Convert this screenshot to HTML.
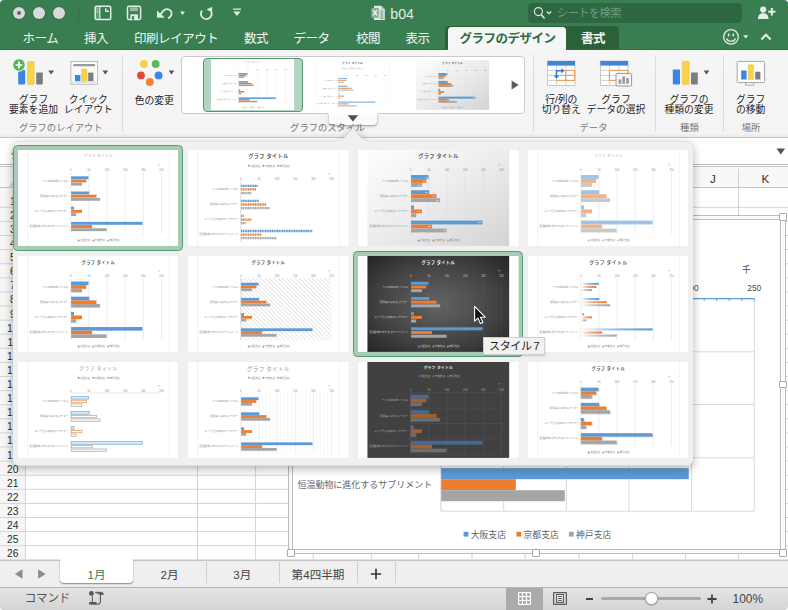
<!DOCTYPE html>
<html lang="ja"><head><meta charset="utf-8"><title>b04</title>
<style>
html,body{margin:0;padding:0;background:#fff;}
body{width:788px;height:610px;overflow:hidden;position:relative;font-family:"Liberation Sans","Noto Sans CJK JP",sans-serif;}
#win{position:absolute;left:0;top:0;width:788px;height:610px;overflow:hidden;border-radius:4px;background:#fff;}
.abs{position:absolute;}
.t{position:absolute;white-space:nowrap;line-height:1;}
.tab{position:absolute;top:31.5px;font-size:12.5px;color:#f3f6f3;white-space:nowrap;line-height:14px;}
.rl{position:absolute;font-size:9.8px;color:#1e1e1e;white-space:nowrap;line-height:10.3px;text-align:center;transform:translateX(-50%);}
.gl{position:absolute;top:123.2px;font-size:9.3px;color:#767676;white-space:nowrap;line-height:11px;transform:translateX(-50%);}
.sep{position:absolute;top:55px;height:77px;width:1px;background:#dcdcdc;}
.rh{position:absolute;left:0;width:25.5px;text-align:center;font-size:10.3px;color:#2a2a2a;line-height:14.1px;height:14.1px;}
.stab{position:absolute;top:568.4px;font-size:11.6px;color:#424242;white-space:nowrap;line-height:13px;transform:translateX(-50%);}
</style></head><body><div id="win">

<div class="abs" style="left:0;top:0;width:788px;height:50px;background:#397e51"></div>
<div class="abs" style="left:0;top:48.8px;width:788px;height:1.2px;background:#2f6b43"></div>
<div class="abs" style="left:13px;top:7px;width:12px;height:12px;border-radius:50%;background:#dbd9db;box-shadow:0 0 0 0.7px #2f6d45"></div>
<div class="abs" style="left:33px;top:7px;width:12px;height:12px;border-radius:50%;background:#dbd9db;box-shadow:0 0 0 0.7px #2f6d45"></div>
<div class="abs" style="left:53px;top:7px;width:12px;height:12px;border-radius:50%;background:#dbd9db;box-shadow:0 0 0 0.7px #2f6d45"></div>
<div class="abs" style="left:16.9px;top:10.8px;width:4.2px;height:4.2px;border-radius:50%;background:#666"></div>
<div class="abs" style="left:78px;top:6px;width:1px;height:15px;background:#33704a"></div>
<svg class="abs" style="left:90px;top:3px" width="160" height="22" viewBox="0 0 160 22" fill="none" stroke="#e4ece6" stroke-width="1.5">
<rect x="5.2" y="3.3" width="15.5" height="13.3" rx="1.4"/><rect x="5.2" y="3.3" width="4.4" height="13.3" fill="#e4ece6" fill-opacity="0.28" stroke="none"/><path d="M9.8 3.3V16.6" stroke-width="1.2"/><path d="M15.6 5.4V8.5H19" stroke-width="1.2"/><path d="M15.6 5.4L19 8.5" stroke-width="0.9"/><path d="M7.3 5.2v0.9M7.3 7.1v0.9M7.3 9v0.9" stroke-width="1.1"/>
<rect x="37.5" y="3.3" width="13.1" height="13.3" rx="1.6"/><rect x="40" y="4.3" width="8" height="3.9" fill="#e4ece6" fill-opacity="0.55" stroke="none"/><path d="M40.4 11.2H48V16.6H40.4Z" fill="#e4ece6" stroke="none"/><rect x="42" y="13.2" width="2.1" height="3.4" fill="#397e51" stroke="none"/>
<path d="M67 7.4V14.8H74.8Z" fill="#e4ece6" stroke="none"/><path d="M70.6 11.2C72.4 8.6 74.4 6 77 6.1 80 6.2 81.9 8.4 81.6 10.6 81.3 13 80 14.6 78.2 15.4" stroke-width="1.7"/>
<path d="M90 8.4h5l-2.5 3.6Z" fill="#e4ece6" stroke="none"/>
<path d="M112 7.4A5.4 5.4 0 1 0 121.3 8.6" stroke-width="1.7"/><path d="M116.6 6.6L122.2 3.8 122 9.6Z" fill="#e4ece6" stroke="none"/>
<path d="M143 6.2h8" stroke-width="1.3"/><path d="M143.3 8.4h7.4l-3.7 4.6Z" fill="#e4ece6" stroke="none"/>
</svg>
<svg class="abs" style="left:370px;top:4px" width="17" height="18" viewBox="0 0 17 18"><path d="M4 1.7H11.2L14.8 5.2V15.9H4Z" fill="#e6ebe7"/><path d="M11.2 1.7V5.2H14.8Z" fill="#b4c6b9"/><path d="M9.6 6.9h4.2M9.6 8.9h4.2M9.6 10.9h4.2M9.6 12.9h4.2M9.6 14.6h4.2M11.8 6.2v8.8" stroke="#6f9c7e" stroke-width="0.7"/><rect x="1.4" y="3.9" width="7.4" height="9.9" fill="#8db29a"/><path d="M3.2 6.2l3.8 5.2M7 6.2L3.2 11.4" stroke="#f1f5f2" stroke-width="1.3"/></svg>
<div class="t" style="left:390.3px;top:6.6px;font-size:14.2px;color:#e3e8e3;line-height:15px">b04</div>
<div class="abs" style="left:528px;top:3px;width:214px;height:20px;border-radius:4px;background:#2d6842"></div>
<svg class="abs" style="left:532px;top:5px" width="22" height="16" viewBox="0 0 22 16" fill="none" stroke="#e4ebe5"><circle cx="6.4" cy="6.6" r="4" stroke-width="1.15"/><path d="M9.3 9.7l3.3 3.7" stroke-width="1.5"/><path d="M14.8 6.5l2.2 2.1 2.2-2.1" stroke-width="1.2"/></svg>
<div class="t" style="left:557px;top:7.2px;font-size:11.2px;color:#6f9c7e;line-height:13px;letter-spacing:-0.55px">シートを検索</div>
<svg class="abs" style="left:757px;top:5px" width="20" height="15" viewBox="0 0 20 15"><circle cx="6.2" cy="4.6" r="3.1" fill="#e6ece7"/><path d="M0.9 14c0-4.2 2.3-5.8 5.3-5.8s5.3 1.6 5.3 5.8Z" fill="#e6ece7"/><path d="M14.8 3v7.4M11.2 6.7h7.2" stroke="#e6ece7" stroke-width="2"/></svg>
<div class="abs" style="left:445px;top:25.5px;width:174px;height:23.5px;border-radius:4px 4px 0 0;background:#2a6139"></div>
<div class="abs" style="left:447.5px;top:27.3px;width:118.5px;height:22.7px;border-radius:3.5px 3.5px 0 0;background:#f6f6f6"></div>
<div class="tab" style="left:22.6px;letter-spacing:-0.45px">ホーム</div>
<div class="tab" style="left:84px;letter-spacing:-0.45px">挿入</div>
<div class="tab" style="left:134px;letter-spacing:-0.45px">印刷レイアウト</div>
<div class="tab" style="left:244px;letter-spacing:-0.45px">数式</div>
<div class="tab" style="left:293.5px;letter-spacing:-0.45px">データ</div>
<div class="tab" style="left:355.9px;letter-spacing:-0.45px">校閲</div>
<div class="tab" style="left:405.5px;letter-spacing:-0.45px">表示</div>
<div class="tab" style="left:459.5px;color:#2f6d46;font-weight:bold;letter-spacing:-0.5px">グラフのデザイン</div>
<div class="tab" style="left:581px;color:#f6f8f6;font-weight:bold;letter-spacing:-0.4px">書式</div>
<svg class="abs" style="left:721px;top:28px" width="60" height="18" viewBox="0 0 60 18" fill="none" stroke="#e6ece7"><circle cx="10" cy="8.9" r="7.3" stroke-width="1.3"/><ellipse cx="7.6" cy="6.9" rx="0.85" ry="1.6" fill="#e6ece7" stroke="none"/><ellipse cx="12.3" cy="6.9" rx="0.85" ry="1.6" fill="#e6ece7" stroke="none"/><path d="M5.5 10.6C7 14.3 13 14.3 14.5 10.6" stroke-width="1.3"/><path d="M22 7.2h5.4l-2.7 3.4Z" fill="#e6ece7" stroke="none"/><path d="M40.4 11.4L45 6.8l4.6 4.6" stroke-width="2.1"/></svg>
<div class="abs" style="left:0;top:50px;width:788px;height:87.2px;background:linear-gradient(#f5f5f5 0,#f4f4f4 83px,#e9e9e9 87.2px)"></div>
<div class="abs" style="left:0;top:137px;width:788px;height:1px;background:#c6c6c6"></div>
<div class="sep" style="left:122.3px"></div>
<div class="sep" style="left:532.6px"></div>
<div class="sep" style="left:655.3px"></div>
<div class="sep" style="left:723.4px"></div>
<svg class="abs" style="left:10px;top:56px" width="48" height="32" viewBox="0 0 48 32"><rect x="8.2" y="14" width="7" height="14.4" rx="0.8" fill="#3b86e0"/><rect x="17.6" y="5.6" width="6.6" height="22.8" rx="0.8" fill="#f8d34c" stroke="#e0b830" stroke-width="0.5"/><rect x="26.2" y="16.6" width="6.6" height="11.8" rx="0.8" fill="#7d7d7d"/><circle cx="9" cy="9" r="6.2" fill="#54b356" stroke="#f4f4f4" stroke-width="1"/><path d="M9 5.6v6.8M5.6 9h6.8" stroke="#fff" stroke-width="1.7"/><path d="M38.2 14.6h5.8l-2.9 3.8Z" fill="#555"/></svg>
<div class="rl" style="left:33.5px;top:94.5px">グラフ<br>要素を追加</div>
<svg class="abs" style="left:68px;top:58px" width="46" height="30" viewBox="0 0 46 30"><rect x="2.9" y="3.6" width="26.6" height="22.6" fill="#fbfbfb" stroke="#b5b5b5" stroke-width="0.9"/><rect x="5.4" y="6" width="21.6" height="2.3" fill="#9a9a9a"/><rect x="7" y="17" width="5.4" height="6.2" fill="#3b86e0"/><rect x="13.6" y="11" width="5.4" height="12.2" fill="#f8d34c" stroke="#e0b830" stroke-width="0.4"/><rect x="20.2" y="14.6" width="5.2" height="8.6" fill="#7d7d7d"/><path d="M4 24.2h24.4" stroke="#cfcfcf" stroke-width="0.8"/><path d="M34.4 12.6h5.8l-2.9 3.8Z" fill="#555"/></svg>
<div class="rl" style="left:88.3px;top:94.5px">クイック<br>レイアウト</div>
<svg class="abs" style="left:134px;top:57px" width="44" height="32" viewBox="0 0 44 32"><circle cx="10" cy="7" r="3.9" fill="#f7d046"/><circle cx="21.7" cy="7" r="3.9" fill="#5cb85c"/><circle cx="7" cy="18.4" r="3.9" fill="#e0483e"/><circle cx="24.6" cy="18.4" r="3.9" fill="#3b86e0"/><circle cx="15.8" cy="24.9" r="3.9" fill="#f08232"/><path d="M34.6 13.6h5.8l-2.9 3.8Z" fill="#555"/></svg>
<div class="rl" style="left:154.3px;top:95.8px">色の変更</div>
<div class="gl" style="left:60.8px">グラフのレイアウト</div>
<div class="abs" style="left:181.2px;top:56.2px;width:343.6px;height:57.4px;border:1px solid #cbcbcb;border-radius:4px;background:#fff;box-sizing:border-box"></div>
<div class="abs" style="left:203px;top:57.6px;width:100px;height:54.4px;border:1.2px solid #4f9a6c;border-radius:4px;background:#b3d4c0;box-sizing:border-box"></div>
<svg style="position:absolute;left:210.7px;top:59.2px" width="83.6" height="51.2" viewBox="0 0 160 96" preserveAspectRatio="none"><rect width="160" height="96" fill="#fff"/><path d="M9.6 0V96M150.8 0V96" stroke="#e6e6e6" stroke-width="0.5" fill="none"/><text x="80" y="7.10" font-family="Liberation Sans, Noto Sans CJK JP, sans-serif" font-size="3.6" font-weight="normal" fill="#a0a0a0" text-anchor="middle" letter-spacing="0.3">グラフ タイトル</text><path d="M52.60 22.20V84.20M70.66 22.20V84.20M88.72 22.20V84.20M106.78 22.20V84.20M124.84 22.20V84.20M142.90 22.20V84.20" stroke="#dedede" stroke-width="0.55" fill="none"/><text x="52.60" y="21.50" font-family="Liberation Sans, Noto Sans CJK JP, sans-serif" font-size="2.6" fill="#8c8c8c" text-anchor="middle">0</text><text x="70.66" y="21.50" font-family="Liberation Sans, Noto Sans CJK JP, sans-serif" font-size="2.6" fill="#8c8c8c" text-anchor="middle">50</text><text x="88.72" y="21.50" font-family="Liberation Sans, Noto Sans CJK JP, sans-serif" font-size="2.6" fill="#8c8c8c" text-anchor="middle">100</text><text x="106.78" y="21.50" font-family="Liberation Sans, Noto Sans CJK JP, sans-serif" font-size="2.6" fill="#8c8c8c" text-anchor="middle">150</text><text x="124.84" y="21.50" font-family="Liberation Sans, Noto Sans CJK JP, sans-serif" font-size="2.6" fill="#8c8c8c" text-anchor="middle">200</text><text x="142.90" y="21.50" font-family="Liberation Sans, Noto Sans CJK JP, sans-serif" font-size="2.6" fill="#8c8c8c" text-anchor="middle">250</text><text x="140.70" y="16.30" font-family="Liberation Sans, Noto Sans CJK JP, sans-serif" font-size="2.4" fill="#8c8c8c" text-anchor="middle">千</text><rect x="52.9" y="26.35" width="17.34" height="2.9" fill="#5b9bd5"/><rect x="52.9" y="29.55" width="15.17" height="2.9" fill="#ed7d31"/><rect x="52.9" y="32.75" width="10.84" height="2.9" fill="#a5a5a5"/><text x="50.2" y="31.90" font-family="Liberation Sans, Noto Sans CJK JP, sans-serif" font-size="2.6" fill="#8c8c8c" text-anchor="end">ウニのabsorbバイスル</text><rect x="52.9" y="41.55" width="18.06" height="2.9" fill="#5b9bd5"/><rect x="52.9" y="44.75" width="25.28" height="2.9" fill="#ed7d31"/><rect x="52.9" y="47.95" width="28.90" height="2.9" fill="#a5a5a5"/><text x="50.2" y="47.10" font-family="Liberation Sans, Noto Sans CJK JP, sans-serif" font-size="2.6" fill="#8c8c8c" text-anchor="end">尻尾蘇になれるパウダー</text><rect x="52.9" y="56.75" width="2.89" height="2.9" fill="#5b9bd5"/><rect x="52.9" y="59.95" width="10.84" height="2.9" fill="#ed7d31"/><rect x="52.9" y="63.15" width="5.06" height="2.9" fill="#a5a5a5"/><text x="50.2" y="62.30" font-family="Liberation Sans, Noto Sans CJK JP, sans-serif" font-size="2.6" fill="#8c8c8c" text-anchor="end">ピンク色に染めるヘアカラー</text><rect x="52.9" y="71.95" width="71.16" height="2.9" fill="#5b9bd5"/><rect x="52.9" y="75.15" width="20.95" height="2.9" fill="#ed7d31"/><rect x="52.9" y="78.35" width="35.40" height="2.9" fill="#a5a5a5"/><text x="50.2" y="77.50" font-family="Liberation Sans, Noto Sans CJK JP, sans-serif" font-size="2.6" fill="#8c8c8c" text-anchor="end">恒温動物に進化するサプリメント</text><rect x="59.60" y="89.80" width="1.7" height="1.7" fill="#5b9bd5"/><text x="61.70" y="91.60" font-family="Liberation Sans, Noto Sans CJK JP, sans-serif" font-size="2.6" fill="#8c8c8c">大阪支店</text><rect x="74.20" y="89.80" width="1.7" height="1.7" fill="#ed7d31"/><text x="76.30" y="91.60" font-family="Liberation Sans, Noto Sans CJK JP, sans-serif" font-size="2.6" fill="#8c8c8c">京都支店</text><rect x="88.80" y="89.80" width="1.7" height="1.7" fill="#a5a5a5"/><text x="90.90" y="91.60" font-family="Liberation Sans, Noto Sans CJK JP, sans-serif" font-size="2.6" fill="#8c8c8c">神戸支店</text></svg>
<svg style="position:absolute;left:310.9px;top:60px" width="83" height="49.8" viewBox="0 0 160 96" preserveAspectRatio="none"><rect width="160" height="96" fill="#fff"/><path d="M9.6 0V96M150.8 0V96" stroke="#e6e6e6" stroke-width="0.5" fill="none"/><text x="80" y="8.47" font-family="Liberation Sans, Noto Sans CJK JP, sans-serif" font-size="5.2" font-weight="bold" fill="#606060" text-anchor="middle" letter-spacing="0.3">グラフ タイトル</text><path d="M52.6 30.60V92.20" stroke="#c4c4c4" stroke-width="0.6"/><text x="52.60" y="30.10" font-family="Liberation Sans, Noto Sans CJK JP, sans-serif" font-size="2.6" fill="#8c8c8c" text-anchor="middle">0</text><text x="70.66" y="30.10" font-family="Liberation Sans, Noto Sans CJK JP, sans-serif" font-size="2.6" fill="#8c8c8c" text-anchor="middle">50</text><text x="88.72" y="30.10" font-family="Liberation Sans, Noto Sans CJK JP, sans-serif" font-size="2.6" fill="#8c8c8c" text-anchor="middle">100</text><text x="106.78" y="30.10" font-family="Liberation Sans, Noto Sans CJK JP, sans-serif" font-size="2.6" fill="#8c8c8c" text-anchor="middle">150</text><text x="124.84" y="30.10" font-family="Liberation Sans, Noto Sans CJK JP, sans-serif" font-size="2.6" fill="#8c8c8c" text-anchor="middle">200</text><text x="142.90" y="30.10" font-family="Liberation Sans, Noto Sans CJK JP, sans-serif" font-size="2.6" fill="#8c8c8c" text-anchor="middle">250</text><text x="140.70" y="24.90" font-family="Liberation Sans, Noto Sans CJK JP, sans-serif" font-size="2.4" fill="#8c8c8c" text-anchor="middle">千</text><line x1="52.90" y1="35.92" x2="69.94" y2="35.92" stroke="#5b9bd5" stroke-width="2.3" stroke-dasharray="1.25 0.45"/><line x1="52.90" y1="39.52" x2="67.77" y2="39.52" stroke="#ed7d31" stroke-width="2.3" stroke-dasharray="1.25 0.45"/><line x1="52.90" y1="43.12" x2="63.44" y2="43.12" stroke="#a5a5a5" stroke-width="2.3" stroke-dasharray="1.25 0.45"/><text x="50.2" y="40.42" font-family="Liberation Sans, Noto Sans CJK JP, sans-serif" font-size="2.6" fill="#8c8c8c" text-anchor="end">ウニのabsorbバイスル</text><line x1="52.90" y1="50.98" x2="70.66" y2="50.98" stroke="#5b9bd5" stroke-width="2.3" stroke-dasharray="1.25 0.45"/><line x1="52.90" y1="54.58" x2="77.88" y2="54.58" stroke="#ed7d31" stroke-width="2.3" stroke-dasharray="1.25 0.45"/><line x1="52.90" y1="58.18" x2="81.50" y2="58.18" stroke="#a5a5a5" stroke-width="2.3" stroke-dasharray="1.25 0.45"/><text x="50.2" y="55.48" font-family="Liberation Sans, Noto Sans CJK JP, sans-serif" font-size="2.6" fill="#8c8c8c" text-anchor="end">尻尾蘇になれるパウダー</text><line x1="52.90" y1="66.03" x2="55.49" y2="66.03" stroke="#5b9bd5" stroke-width="2.3" stroke-dasharray="1.25 0.45"/><line x1="52.90" y1="69.62" x2="63.44" y2="69.62" stroke="#ed7d31" stroke-width="2.3" stroke-dasharray="1.25 0.45"/><line x1="52.90" y1="73.23" x2="57.66" y2="73.23" stroke="#a5a5a5" stroke-width="2.3" stroke-dasharray="1.25 0.45"/><text x="50.2" y="70.53" font-family="Liberation Sans, Noto Sans CJK JP, sans-serif" font-size="2.6" fill="#8c8c8c" text-anchor="end">ピンク色に染めるヘアカラー</text><line x1="52.90" y1="81.08" x2="123.76" y2="81.08" stroke="#5b9bd5" stroke-width="2.3" stroke-dasharray="1.25 0.45"/><line x1="52.90" y1="84.68" x2="73.55" y2="84.68" stroke="#ed7d31" stroke-width="2.3" stroke-dasharray="1.25 0.45"/><line x1="52.90" y1="88.28" x2="88.00" y2="88.28" stroke="#a5a5a5" stroke-width="2.3" stroke-dasharray="1.25 0.45"/><text x="50.2" y="85.58" font-family="Liberation Sans, Noto Sans CJK JP, sans-serif" font-size="2.6" fill="#8c8c8c" text-anchor="end">恒温動物に進化するサプリメント</text><rect x="59.60" y="14.90" width="1.7" height="1.7" fill="#5b9bd5"/><text x="61.70" y="16.70" font-family="Liberation Sans, Noto Sans CJK JP, sans-serif" font-size="2.6" fill="#8c8c8c">大阪支店</text><rect x="74.20" y="14.90" width="1.7" height="1.7" fill="#ed7d31"/><text x="76.30" y="16.70" font-family="Liberation Sans, Noto Sans CJK JP, sans-serif" font-size="2.6" fill="#8c8c8c">京都支店</text><rect x="88.80" y="14.90" width="1.7" height="1.7" fill="#a5a5a5"/><text x="90.90" y="16.70" font-family="Liberation Sans, Noto Sans CJK JP, sans-serif" font-size="2.6" fill="#8c8c8c">神戸支店</text></svg>
<svg style="position:absolute;left:411.1px;top:60px" width="83" height="49.8" viewBox="0 0 160 96" preserveAspectRatio="none"><rect width="160" height="96" fill="#fff"/><defs><linearGradient id="g3gc" x1="0" y1="0" x2="1" y2="1"><stop offset="0" stop-color="#fefefe"/><stop offset="0.5" stop-color="#ececec"/><stop offset="1" stop-color="#d3d3d3"/></linearGradient></defs><rect x="9.4" y="0" width="141.2" height="96" fill="url(#g3gc)"/><text x="80" y="8.27" font-family="Liberation Sans, Noto Sans CJK JP, sans-serif" font-size="5.2" font-weight="bold" fill="#606060" text-anchor="middle" letter-spacing="0.3">グラフ タイトル</text><path d="M52.60 22.20V84.20M70.66 22.20V84.20M88.72 22.20V84.20M106.78 22.20V84.20M124.84 22.20V84.20M142.90 22.20V84.20" stroke="#dedede" stroke-width="0.55" fill="none"/><text x="52.60" y="21.50" font-family="Liberation Sans, Noto Sans CJK JP, sans-serif" font-size="2.6" fill="#8c8c8c" text-anchor="middle">0</text><text x="70.66" y="21.50" font-family="Liberation Sans, Noto Sans CJK JP, sans-serif" font-size="2.6" fill="#8c8c8c" text-anchor="middle">50</text><text x="88.72" y="21.50" font-family="Liberation Sans, Noto Sans CJK JP, sans-serif" font-size="2.6" fill="#8c8c8c" text-anchor="middle">100</text><text x="106.78" y="21.50" font-family="Liberation Sans, Noto Sans CJK JP, sans-serif" font-size="2.6" fill="#8c8c8c" text-anchor="middle">150</text><text x="124.84" y="21.50" font-family="Liberation Sans, Noto Sans CJK JP, sans-serif" font-size="2.6" fill="#8c8c8c" text-anchor="middle">200</text><text x="142.90" y="21.50" font-family="Liberation Sans, Noto Sans CJK JP, sans-serif" font-size="2.6" fill="#8c8c8c" text-anchor="middle">250</text><text x="140.70" y="16.30" font-family="Liberation Sans, Noto Sans CJK JP, sans-serif" font-size="2.4" fill="#8c8c8c" text-anchor="middle">千</text><rect x="52.9" y="25.07" width="17.34" height="3.85" fill="#5b9bd5"/><text x="68.94" y="27.93" font-family="Liberation Sans, Noto Sans CJK JP, sans-serif" font-size="2.3" fill="#fff" text-anchor="end">48</text><rect x="52.9" y="29.07" width="15.17" height="3.85" fill="#ed7d31"/><text x="66.77" y="31.92" font-family="Liberation Sans, Noto Sans CJK JP, sans-serif" font-size="2.3" fill="#fff" text-anchor="end">42</text><rect x="52.9" y="33.08" width="10.84" height="3.85" fill="#a5a5a5"/><text x="62.44" y="35.93" font-family="Liberation Sans, Noto Sans CJK JP, sans-serif" font-size="2.3" fill="#fff" text-anchor="end">30</text><text x="50.2" y="31.90" font-family="Liberation Sans, Noto Sans CJK JP, sans-serif" font-size="2.6" fill="#8c8c8c" text-anchor="end">ウニのabsorbバイスル</text><rect x="52.9" y="40.27" width="18.06" height="3.85" fill="#5b9bd5"/><text x="69.66" y="43.12" font-family="Liberation Sans, Noto Sans CJK JP, sans-serif" font-size="2.3" fill="#fff" text-anchor="end">50</text><rect x="52.9" y="44.27" width="25.28" height="3.85" fill="#ed7d31"/><text x="76.88" y="47.12" font-family="Liberation Sans, Noto Sans CJK JP, sans-serif" font-size="2.3" fill="#fff" text-anchor="end">70</text><rect x="52.9" y="48.27" width="28.90" height="3.85" fill="#a5a5a5"/><text x="80.50" y="51.12" font-family="Liberation Sans, Noto Sans CJK JP, sans-serif" font-size="2.3" fill="#fff" text-anchor="end">80</text><text x="50.2" y="47.10" font-family="Liberation Sans, Noto Sans CJK JP, sans-serif" font-size="2.6" fill="#8c8c8c" text-anchor="end">尻尾蘇になれるパウダー</text><rect x="52.9" y="55.48" width="2.89" height="3.85" fill="#5b9bd5"/><rect x="52.9" y="59.48" width="10.84" height="3.85" fill="#ed7d31"/><text x="62.44" y="62.33" font-family="Liberation Sans, Noto Sans CJK JP, sans-serif" font-size="2.3" fill="#fff" text-anchor="end">30</text><rect x="52.9" y="63.48" width="5.06" height="3.85" fill="#a5a5a5"/><text x="50.2" y="62.30" font-family="Liberation Sans, Noto Sans CJK JP, sans-serif" font-size="2.6" fill="#8c8c8c" text-anchor="end">ピンク色に染めるヘアカラー</text><rect x="52.9" y="70.67" width="71.16" height="3.85" fill="#5b9bd5"/><text x="122.76" y="73.52" font-family="Liberation Sans, Noto Sans CJK JP, sans-serif" font-size="2.3" fill="#fff" text-anchor="end">197</text><rect x="52.9" y="74.67" width="20.95" height="3.85" fill="#ed7d31"/><text x="72.55" y="77.52" font-family="Liberation Sans, Noto Sans CJK JP, sans-serif" font-size="2.3" fill="#fff" text-anchor="end">58</text><rect x="52.9" y="78.67" width="35.40" height="3.85" fill="#a5a5a5"/><text x="87.00" y="81.52" font-family="Liberation Sans, Noto Sans CJK JP, sans-serif" font-size="2.3" fill="#fff" text-anchor="end">98</text><text x="50.2" y="77.50" font-family="Liberation Sans, Noto Sans CJK JP, sans-serif" font-size="2.6" fill="#8c8c8c" text-anchor="end">恒温動物に進化するサプリメント</text><rect x="59.60" y="89.80" width="1.7" height="1.7" fill="#5b9bd5"/><text x="61.70" y="91.60" font-family="Liberation Sans, Noto Sans CJK JP, sans-serif" font-size="2.6" fill="#8c8c8c">大阪支店</text><rect x="74.20" y="89.80" width="1.7" height="1.7" fill="#ed7d31"/><text x="76.30" y="91.60" font-family="Liberation Sans, Noto Sans CJK JP, sans-serif" font-size="2.6" fill="#8c8c8c">京都支店</text><rect x="88.80" y="89.80" width="1.7" height="1.7" fill="#a5a5a5"/><text x="90.90" y="91.60" font-family="Liberation Sans, Noto Sans CJK JP, sans-serif" font-size="2.6" fill="#8c8c8c">神戸支店</text></svg>
<svg class="abs" style="left:510px;top:79px" width="10" height="12" viewBox="0 0 10 12"><path d="M1.6 1.4L8.6 6 1.6 10.6Z" fill="#5a5a5a"/></svg>
<div class="abs" style="left:329.3px;top:113px;width:47.6px;height:11.8px;background:#fbfbfb;border-radius:0 0 4px 4px;box-shadow:0 1px 2.5px rgba(0,0,0,0.4)"></div>
<div class="abs" style="left:328.2px;top:109.5px;width:49.8px;height:4px;background:#fff"></div>
<svg class="abs" style="left:346px;top:114px" width="14" height="9" viewBox="0 0 14 9"><path d="M1.6 1.2h10.6L6.9 7.6Z" fill="#4f4f4f"/></svg>
<div class="gl" style="left:327.3px">グラフのスタイル</div>
<svg class="abs" style="left:545px;top:58px" width="34" height="30" viewBox="0 0 34 30"><rect x="2.4" y="3" width="27.6" height="24.4" fill="#fff" stroke="#bdbdbd" stroke-width="0.8"/><rect x="2.4" y="3" width="27.6" height="4.6" fill="#3e86dc"/><path d="M2.4 12.4H30M2.4 17.4H30M2.4 22.4H30M11.4 3V27.4M20.8 3V27.4" stroke="#c4c4c4" stroke-width="0.8" fill="none"/><path d="M11.4 7.6V3M20.8 7.6V3" stroke="#2a6fc4" stroke-width="0.8"/><path d="M20.8 12.4H29.8V22.4H20.8ZM20.8 17.4H29.8M11.4 22.4H20.8M15 17.4H20.8" stroke="#f0984e" stroke-width="1" fill="none"/><path d="M17 12.7H11.5V18" stroke="#2f7ad6" stroke-width="1.5" fill="none"/><path d="M16.4 9.9L19.6 12.7 16.4 15.5ZM8.7 17.4H14.3L11.5 20.7Z" fill="#2f7ad6"/></svg>
<div class="rl" style="left:561.3px;top:94.5px">行/列の<br>切り替え</div>
<svg class="abs" style="left:598px;top:58px" width="36" height="30" viewBox="0 0 36 30"><rect x="2.4" y="3" width="27.6" height="24.4" fill="#fff" stroke="#bdbdbd" stroke-width="0.8"/><rect x="2.4" y="3" width="27.6" height="4.6" fill="#3e86dc"/><path d="M2.4 12.4H30M2.4 17.4H30M2.4 22.4H30M11.4 3V27.4M20.8 3V27.4" stroke="#c4c4c4" stroke-width="0.8" fill="none"/><path d="M11.4 7.6V3M20.8 7.6V3" stroke="#2a6fc4" stroke-width="0.8"/><path d="M11.4 12.4H30V22.4H11.4Z" stroke="#f0984e" stroke-width="1" fill="none"/><rect x="18" y="15.4" width="15.6" height="12.6" rx="1" fill="#f6f6f6" stroke="#8e8e8e" stroke-width="0.9"/><rect x="20.6" y="21.4" width="2.6" height="4.4" fill="#9a9a9a"/><rect x="24.4" y="18.4" width="2.6" height="7.4" fill="#9a9a9a"/><rect x="28.2" y="20" width="2.6" height="5.8" fill="#9a9a9a"/></svg>
<div class="rl" style="left:616px;top:94.5px">グラフ<br>データの選択</div>
<div class="gl" style="left:593.5px">データ</div>
<svg class="abs" style="left:668px;top:56px" width="46" height="32" viewBox="0 0 46 32"><rect x="4.8" y="13.4" width="7.2" height="15" rx="0.8" fill="#3b86e0"/><rect x="14.3" y="5.3" width="6.8" height="23.1" rx="0.8" fill="#f8d34c" stroke="#e0b830" stroke-width="0.5"/><rect x="23" y="16.4" width="6.8" height="12" rx="0.8" fill="#7d7d7d"/><path d="M35.6 14.6h5.8l-2.9 3.8Z" fill="#555"/></svg>
<div class="rl" style="left:689px;top:94.5px">グラフの<br>種類の変更</div>
<div class="gl" style="left:689.4px">種類</div>
<svg class="abs" style="left:734px;top:58px" width="34" height="30" viewBox="0 0 34 30"><rect x="3.2" y="3.4" width="27.4" height="21.2" rx="1" fill="#fdfdfd" stroke="#9c9c9c" stroke-width="0.9"/><rect x="11.6" y="24.6" width="8.4" height="2.6" fill="#e8e8e8" stroke="#9a9a9a" stroke-width="0.6"/><rect x="7.2" y="12.6" width="5.4" height="9" rx="0.6" fill="#3b86e0"/><rect x="14.2" y="6.8" width="5.4" height="14.8" rx="0.6" fill="#f8d34c" stroke="#e0b830" stroke-width="0.4"/><rect x="21.2" y="13.8" width="5.2" height="7.8" rx="0.6" fill="#7d7d7d"/></svg>
<div class="rl" style="left:750.7px;top:94.5px">グラフ<br>の移動</div>
<div class="gl" style="left:751px">場所</div>
<div class="abs" style="left:0;top:138px;width:788px;height:27px;background:#fff"></div>
<div class="abs" style="left:0;top:164.2px;width:788px;height:1px;background:#bdbdbd"></div>
<div class="abs" style="left:0;top:166.2px;width:788px;height:1px;background:#c9c9c9"></div>
<div class="abs" style="left:0;top:167.2px;width:788px;height:20.4px;background:#f8f8f8"></div>
<div class="abs" style="left:0;top:187.4px;width:788px;height:1px;background:#c4c4c4"></div>
<svg class="abs" style="left:775px;top:147px" width="12" height="9" viewBox="0 0 12 9"><path d="M1.4 1.4h8.8L5.8 7.6Z" fill="#555"/></svg>
<div class="t" style="left:10.6px;top:147.5px;font-size:10.5px;color:#222;line-height:12px">グラフ 1</div>
<div class="t" style="left:713px;top:172.5px;font-size:11.6px;color:#333;line-height:12px;transform:translateX(-50%)">J</div>
<div class="t" style="left:765.3px;top:172.5px;font-size:11.6px;color:#333;line-height:12px;transform:translateX(-50%)">K</div>
<div class="abs" style="left:738.2px;top:169px;width:1px;height:19px;background:#cfcfcf"></div>
<div class="abs" style="left:685.6px;top:169px;width:1px;height:19px;background:#cfcfcf"></div>
<svg class="abs" style="left:6px;top:176px" width="12" height="12" viewBox="0 0 12 12"><path d="M10.4 2.6V10.6H2.4Z" fill="#d2d2d2"/></svg>
<svg class="abs" style="left:0;top:188px" width="788" height="372" viewBox="0 188 788 372"><rect x="0" y="188" width="25.5" height="372" fill="#f6f6f6"/><g stroke="#d4d4d4" stroke-width="1" fill="none"><path d="M0 207.3H788M0 221.4H788M0 235.5H788M0 249.6H788M0 263.7H788M0 277.8H788M0 291.9H788M0 306.0H788M0 320.1H788M0 334.2H788M0 348.3H788M0 362.4H788M0 376.5H788M0 390.6H788M0 404.7H788M0 418.8H788M0 432.9H788M0 447.0H788M0 461.1H788M0 475.2H788M0 489.3H788M0 503.4H788M0 517.5H788M0 531.6H788M0 545.7H788M0 559.8H788M25.5 188V560M197.5 188V560M255.6 188V560M313.2 188V560M371.7 188V560M418.6 188V560M472 188V560M525.2 188V560M579 188V560M632.6 188V560M685.6 188V560M738.4 188V560"/></g></svg>
<div class="rh" style="top:194.6px">1</div>
<div class="rh" style="top:208.8px">2</div>
<div class="rh" style="top:222.9px">3</div>
<div class="rh" style="top:237.0px">4</div>
<div class="rh" style="top:251.1px">5</div>
<div class="rh" style="top:265.2px">6</div>
<div class="rh" style="top:279.3px">7</div>
<div class="rh" style="top:293.4px">8</div>
<div class="rh" style="top:307.5px">9</div>
<div class="rh" style="top:321.6px">10</div>
<div class="rh" style="top:335.7px">11</div>
<div class="rh" style="top:349.8px">12</div>
<div class="rh" style="top:363.9px">13</div>
<div class="rh" style="top:378.0px">14</div>
<div class="rh" style="top:392.1px">15</div>
<div class="rh" style="top:406.2px">16</div>
<div class="rh" style="top:420.3px">17</div>
<div class="rh" style="top:434.4px">18</div>
<div class="rh" style="top:448.5px">19</div>
<div class="rh" style="top:462.6px">20</div>
<div class="rh" style="top:476.7px">21</div>
<div class="rh" style="top:490.8px">22</div>
<div class="rh" style="top:504.9px">23</div>
<div class="rh" style="top:519.0px">24</div>
<div class="rh" style="top:533.1px">25</div>
<div class="rh" style="top:547.2px">26</div>
<div class="abs" style="left:288.2px;top:214.6px;width:497.4px;height:339.6px;box-sizing:border-box;border:1px solid #bcbcbc;background:#fbfbfb"></div>
<div class="abs" style="left:292.4px;top:218.8px;width:489px;height:331.2px;box-sizing:border-box;border:1px solid #bcbcbc;background:#fff"></div>
<svg class="abs" style="left:293.4px;top:219.8px" width="487" height="329.2" viewBox="293.4 219.8 487 329.2"><g stroke="#d9d9d9" stroke-width="1" fill="none"><path d="M504.1 299V511M566.7 299V511M629.4 299V511M692.0 299V511M754.7 299V511M441.4 351.6H754.7M441.4 404.4H754.7M441.4 457.6H754.7M441.4 511H754.7"/></g><path d="M441.4 298.4H754.7" stroke="#5b9bd5" stroke-width="1.2"/><path d="M441.40 298.4v2.6M453.93 298.4v2.6M466.46 298.4v2.6M479.00 298.4v2.6M491.53 298.4v2.6M504.06 298.4v2.6M516.59 298.4v2.6M529.12 298.4v2.6M541.66 298.4v2.6M554.19 298.4v2.6M566.72 298.4v2.6M579.25 298.4v2.6M591.78 298.4v2.6M604.32 298.4v2.6M616.85 298.4v2.6M629.38 298.4v2.6M641.91 298.4v2.6M654.44 298.4v2.6M666.98 298.4v2.6M679.51 298.4v2.6M692.04 298.4v2.6M704.57 298.4v2.6M717.10 298.4v2.6M729.64 298.4v2.6M742.17 298.4v2.6M754.70 298.4v2.6" stroke="#5b9bd5" stroke-width="0.9"/><path d="M441.4 298.4V511" stroke="#d0d0d0" stroke-width="1"/><rect x="441.6" y="468" width="247.6" height="11" fill="#5b9bd5"/><rect x="441.6" y="479" width="74.6" height="11" fill="#ed7d31"/><rect x="441.6" y="490" width="123.6" height="11" fill="#a5a5a5"/><g font-family="Liberation Sans, Noto Sans CJK JP, sans-serif" fill="#484848"><text x="441.4" y="291.2" font-size="8.4" text-anchor="middle">0</text><text x="504.1" y="291.2" font-size="8.4" text-anchor="middle">50</text><text x="566.7" y="291.2" font-size="8.4" text-anchor="middle">100</text><text x="629.4" y="291.2" font-size="8.4" text-anchor="middle">150</text><text x="692.0" y="291.2" font-size="8.4" text-anchor="middle">200</text><text x="754.7" y="291.2" font-size="8.4" text-anchor="middle">250</text><text x="746.8" y="272.8" font-size="8.6" text-anchor="middle">千</text><text x="432.6" y="487.4" font-size="9" text-anchor="end" fill="#666">恒温動物に進化するサプリメント</text><rect x="464" y="531.6" width="4.8" height="4.8" fill="#5b9bd5"/><text x="471.2" y="537.4" font-size="8.8" fill="#5c5c5c">大阪支店</text><rect x="516.8" y="531.6" width="4.8" height="4.8" fill="#ed7d31"/><text x="524.0" y="537.4" font-size="8.8" fill="#5c5c5c">京都支店</text><rect x="569.3" y="531.6" width="4.8" height="4.8" fill="#a5a5a5"/><text x="576.5" y="537.4" font-size="8.8" fill="#5c5c5c">神戸支店</text></g></svg>
<div class="abs" style="left:286.6px;top:213.0px;width:8px;height:7.6px;box-sizing:border-box;border:1px solid #a9a9a9;background:#fff;border-radius:1px"></div>
<div class="abs" style="left:532.4px;top:213.0px;width:8px;height:7.6px;box-sizing:border-box;border:1px solid #a9a9a9;background:#fff;border-radius:1px"></div>
<div class="abs" style="left:779.4px;top:213.0px;width:8px;height:7.6px;box-sizing:border-box;border:1px solid #a9a9a9;background:#fff;border-radius:1px"></div>
<div class="abs" style="left:286.6px;top:380.59999999999997px;width:8px;height:7.6px;box-sizing:border-box;border:1px solid #a9a9a9;background:#fff;border-radius:1px"></div>
<div class="abs" style="left:779.4px;top:380.59999999999997px;width:8px;height:7.6px;box-sizing:border-box;border:1px solid #a9a9a9;background:#fff;border-radius:1px"></div>
<div class="abs" style="left:286.6px;top:549.0px;width:8px;height:7.6px;box-sizing:border-box;border:1px solid #a9a9a9;background:#fff;border-radius:1px"></div>
<div class="abs" style="left:532.4px;top:549.0px;width:8px;height:7.6px;box-sizing:border-box;border:1px solid #a9a9a9;background:#fff;border-radius:1px"></div>
<div class="abs" style="left:779.4px;top:549.0px;width:8px;height:7.6px;box-sizing:border-box;border:1px solid #a9a9a9;background:#fff;border-radius:1px"></div>
<svg class="abs" style="left:0;top:110px;filter:drop-shadow(0 0 0.5px rgba(0,0,0,0.25)) drop-shadow(0 3px 5px rgba(0,0,0,0.3));overflow:visible" width="788" height="380" viewBox="0 110 788 380"><path d="M18.8 141.2H334C343.5 141.2 347.6 134.5 352.8 127.6C358 134.5 362.1 141.2 371.6 141.2H687A6 6 0 0 1 693 147.2V459.8A6 6 0 0 1 687 465.8H18.8A6 6 0 0 1 12.8 459.8V147.2A6 6 0 0 1 18.8 141.2Z" fill="#f0f0f0"/></svg>
<div class="abs" style="left:13.2px;top:145.2px;width:170px;height:105.4px;box-sizing:border-box;border:1.4px solid #549d74;border-radius:4.5px;background:#a8cbb6"></div>
<div class="abs" style="left:353px;top:251.3px;width:170.4px;height:105.5px;box-sizing:border-box;border:1.4px solid #549d74;border-radius:4.5px;background:#a8cbb6"></div>
<svg style="position:absolute;left:17.8px;top:149.8px" width="160.6" height="95.9" viewBox="0 0 160 96" preserveAspectRatio="none"><rect width="160" height="96" fill="#fff"/><path d="M9.6 0V96M150.8 0V96" stroke="#e6e6e6" stroke-width="0.5" fill="none"/><text x="80" y="7.10" font-family="Liberation Sans, Noto Sans CJK JP, sans-serif" font-size="3.6" font-weight="normal" fill="#a0a0a0" text-anchor="middle" letter-spacing="0.3">グラフ タイトル</text><path d="M52.60 22.20V84.20M70.66 22.20V84.20M88.72 22.20V84.20M106.78 22.20V84.20M124.84 22.20V84.20M142.90 22.20V84.20" stroke="#dedede" stroke-width="0.55" fill="none"/><text x="52.60" y="21.50" font-family="Liberation Sans, Noto Sans CJK JP, sans-serif" font-size="2.6" fill="#8c8c8c" text-anchor="middle">0</text><text x="70.66" y="21.50" font-family="Liberation Sans, Noto Sans CJK JP, sans-serif" font-size="2.6" fill="#8c8c8c" text-anchor="middle">50</text><text x="88.72" y="21.50" font-family="Liberation Sans, Noto Sans CJK JP, sans-serif" font-size="2.6" fill="#8c8c8c" text-anchor="middle">100</text><text x="106.78" y="21.50" font-family="Liberation Sans, Noto Sans CJK JP, sans-serif" font-size="2.6" fill="#8c8c8c" text-anchor="middle">150</text><text x="124.84" y="21.50" font-family="Liberation Sans, Noto Sans CJK JP, sans-serif" font-size="2.6" fill="#8c8c8c" text-anchor="middle">200</text><text x="142.90" y="21.50" font-family="Liberation Sans, Noto Sans CJK JP, sans-serif" font-size="2.6" fill="#8c8c8c" text-anchor="middle">250</text><text x="140.70" y="16.30" font-family="Liberation Sans, Noto Sans CJK JP, sans-serif" font-size="2.4" fill="#8c8c8c" text-anchor="middle">千</text><rect x="52.9" y="26.35" width="17.34" height="2.9" fill="#5b9bd5"/><rect x="52.9" y="29.55" width="15.17" height="2.9" fill="#ed7d31"/><rect x="52.9" y="32.75" width="10.84" height="2.9" fill="#a5a5a5"/><text x="50.2" y="31.90" font-family="Liberation Sans, Noto Sans CJK JP, sans-serif" font-size="2.6" fill="#8c8c8c" text-anchor="end">ウニのabsorbバイスル</text><rect x="52.9" y="41.55" width="18.06" height="2.9" fill="#5b9bd5"/><rect x="52.9" y="44.75" width="25.28" height="2.9" fill="#ed7d31"/><rect x="52.9" y="47.95" width="28.90" height="2.9" fill="#a5a5a5"/><text x="50.2" y="47.10" font-family="Liberation Sans, Noto Sans CJK JP, sans-serif" font-size="2.6" fill="#8c8c8c" text-anchor="end">尻尾蘇になれるパウダー</text><rect x="52.9" y="56.75" width="2.89" height="2.9" fill="#5b9bd5"/><rect x="52.9" y="59.95" width="10.84" height="2.9" fill="#ed7d31"/><rect x="52.9" y="63.15" width="5.06" height="2.9" fill="#a5a5a5"/><text x="50.2" y="62.30" font-family="Liberation Sans, Noto Sans CJK JP, sans-serif" font-size="2.6" fill="#8c8c8c" text-anchor="end">ピンク色に染めるヘアカラー</text><rect x="52.9" y="71.95" width="71.16" height="2.9" fill="#5b9bd5"/><rect x="52.9" y="75.15" width="20.95" height="2.9" fill="#ed7d31"/><rect x="52.9" y="78.35" width="35.40" height="2.9" fill="#a5a5a5"/><text x="50.2" y="77.50" font-family="Liberation Sans, Noto Sans CJK JP, sans-serif" font-size="2.6" fill="#8c8c8c" text-anchor="end">恒温動物に進化するサプリメント</text><rect x="59.60" y="89.80" width="1.7" height="1.7" fill="#5b9bd5"/><text x="61.70" y="91.60" font-family="Liberation Sans, Noto Sans CJK JP, sans-serif" font-size="2.6" fill="#8c8c8c">大阪支店</text><rect x="74.20" y="89.80" width="1.7" height="1.7" fill="#ed7d31"/><text x="76.30" y="91.60" font-family="Liberation Sans, Noto Sans CJK JP, sans-serif" font-size="2.6" fill="#8c8c8c">京都支店</text><rect x="88.80" y="89.80" width="1.7" height="1.7" fill="#a5a5a5"/><text x="90.90" y="91.60" font-family="Liberation Sans, Noto Sans CJK JP, sans-serif" font-size="2.6" fill="#8c8c8c">神戸支店</text></svg>
<svg style="position:absolute;left:188px;top:149.8px" width="160.6" height="95.9" viewBox="0 0 160 96" preserveAspectRatio="none"><rect width="160" height="96" fill="#fff"/><path d="M9.6 0V96M150.8 0V96" stroke="#e6e6e6" stroke-width="0.5" fill="none"/><text x="80" y="8.47" font-family="Liberation Sans, Noto Sans CJK JP, sans-serif" font-size="5.2" font-weight="bold" fill="#606060" text-anchor="middle" letter-spacing="0.3">グラフ タイトル</text><path d="M52.6 30.60V92.20" stroke="#c4c4c4" stroke-width="0.6"/><text x="52.60" y="30.10" font-family="Liberation Sans, Noto Sans CJK JP, sans-serif" font-size="2.6" fill="#8c8c8c" text-anchor="middle">0</text><text x="70.66" y="30.10" font-family="Liberation Sans, Noto Sans CJK JP, sans-serif" font-size="2.6" fill="#8c8c8c" text-anchor="middle">50</text><text x="88.72" y="30.10" font-family="Liberation Sans, Noto Sans CJK JP, sans-serif" font-size="2.6" fill="#8c8c8c" text-anchor="middle">100</text><text x="106.78" y="30.10" font-family="Liberation Sans, Noto Sans CJK JP, sans-serif" font-size="2.6" fill="#8c8c8c" text-anchor="middle">150</text><text x="124.84" y="30.10" font-family="Liberation Sans, Noto Sans CJK JP, sans-serif" font-size="2.6" fill="#8c8c8c" text-anchor="middle">200</text><text x="142.90" y="30.10" font-family="Liberation Sans, Noto Sans CJK JP, sans-serif" font-size="2.6" fill="#8c8c8c" text-anchor="middle">250</text><text x="140.70" y="24.90" font-family="Liberation Sans, Noto Sans CJK JP, sans-serif" font-size="2.4" fill="#8c8c8c" text-anchor="middle">千</text><line x1="52.90" y1="35.92" x2="69.94" y2="35.92" stroke="#5b9bd5" stroke-width="2.3" stroke-dasharray="1.25 0.45"/><line x1="52.90" y1="39.52" x2="67.77" y2="39.52" stroke="#ed7d31" stroke-width="2.3" stroke-dasharray="1.25 0.45"/><line x1="52.90" y1="43.12" x2="63.44" y2="43.12" stroke="#a5a5a5" stroke-width="2.3" stroke-dasharray="1.25 0.45"/><text x="50.2" y="40.42" font-family="Liberation Sans, Noto Sans CJK JP, sans-serif" font-size="2.6" fill="#8c8c8c" text-anchor="end">ウニのabsorbバイスル</text><line x1="52.90" y1="50.98" x2="70.66" y2="50.98" stroke="#5b9bd5" stroke-width="2.3" stroke-dasharray="1.25 0.45"/><line x1="52.90" y1="54.58" x2="77.88" y2="54.58" stroke="#ed7d31" stroke-width="2.3" stroke-dasharray="1.25 0.45"/><line x1="52.90" y1="58.18" x2="81.50" y2="58.18" stroke="#a5a5a5" stroke-width="2.3" stroke-dasharray="1.25 0.45"/><text x="50.2" y="55.48" font-family="Liberation Sans, Noto Sans CJK JP, sans-serif" font-size="2.6" fill="#8c8c8c" text-anchor="end">尻尾蘇になれるパウダー</text><line x1="52.90" y1="66.03" x2="55.49" y2="66.03" stroke="#5b9bd5" stroke-width="2.3" stroke-dasharray="1.25 0.45"/><line x1="52.90" y1="69.62" x2="63.44" y2="69.62" stroke="#ed7d31" stroke-width="2.3" stroke-dasharray="1.25 0.45"/><line x1="52.90" y1="73.23" x2="57.66" y2="73.23" stroke="#a5a5a5" stroke-width="2.3" stroke-dasharray="1.25 0.45"/><text x="50.2" y="70.53" font-family="Liberation Sans, Noto Sans CJK JP, sans-serif" font-size="2.6" fill="#8c8c8c" text-anchor="end">ピンク色に染めるヘアカラー</text><line x1="52.90" y1="81.08" x2="123.76" y2="81.08" stroke="#5b9bd5" stroke-width="2.3" stroke-dasharray="1.25 0.45"/><line x1="52.90" y1="84.68" x2="73.55" y2="84.68" stroke="#ed7d31" stroke-width="2.3" stroke-dasharray="1.25 0.45"/><line x1="52.90" y1="88.28" x2="88.00" y2="88.28" stroke="#a5a5a5" stroke-width="2.3" stroke-dasharray="1.25 0.45"/><text x="50.2" y="85.58" font-family="Liberation Sans, Noto Sans CJK JP, sans-serif" font-size="2.6" fill="#8c8c8c" text-anchor="end">恒温動物に進化するサプリメント</text><rect x="59.60" y="14.90" width="1.7" height="1.7" fill="#5b9bd5"/><text x="61.70" y="16.70" font-family="Liberation Sans, Noto Sans CJK JP, sans-serif" font-size="2.6" fill="#8c8c8c">大阪支店</text><rect x="74.20" y="14.90" width="1.7" height="1.7" fill="#ed7d31"/><text x="76.30" y="16.70" font-family="Liberation Sans, Noto Sans CJK JP, sans-serif" font-size="2.6" fill="#8c8c8c">京都支店</text><rect x="88.80" y="14.90" width="1.7" height="1.7" fill="#a5a5a5"/><text x="90.90" y="16.70" font-family="Liberation Sans, Noto Sans CJK JP, sans-serif" font-size="2.6" fill="#8c8c8c">神戸支店</text></svg>
<svg style="position:absolute;left:358px;top:149.8px" width="160.6" height="95.9" viewBox="0 0 160 96" preserveAspectRatio="none"><rect width="160" height="96" fill="#fff"/><defs><linearGradient id="g3p3" x1="0" y1="0" x2="1" y2="1"><stop offset="0" stop-color="#fefefe"/><stop offset="0.5" stop-color="#ececec"/><stop offset="1" stop-color="#d3d3d3"/></linearGradient></defs><rect x="9.4" y="0" width="141.2" height="96" fill="url(#g3p3)"/><text x="80" y="8.27" font-family="Liberation Sans, Noto Sans CJK JP, sans-serif" font-size="5.2" font-weight="bold" fill="#606060" text-anchor="middle" letter-spacing="0.3">グラフ タイトル</text><path d="M52.60 22.20V84.20M70.66 22.20V84.20M88.72 22.20V84.20M106.78 22.20V84.20M124.84 22.20V84.20M142.90 22.20V84.20" stroke="#dedede" stroke-width="0.55" fill="none"/><text x="52.60" y="21.50" font-family="Liberation Sans, Noto Sans CJK JP, sans-serif" font-size="2.6" fill="#8c8c8c" text-anchor="middle">0</text><text x="70.66" y="21.50" font-family="Liberation Sans, Noto Sans CJK JP, sans-serif" font-size="2.6" fill="#8c8c8c" text-anchor="middle">50</text><text x="88.72" y="21.50" font-family="Liberation Sans, Noto Sans CJK JP, sans-serif" font-size="2.6" fill="#8c8c8c" text-anchor="middle">100</text><text x="106.78" y="21.50" font-family="Liberation Sans, Noto Sans CJK JP, sans-serif" font-size="2.6" fill="#8c8c8c" text-anchor="middle">150</text><text x="124.84" y="21.50" font-family="Liberation Sans, Noto Sans CJK JP, sans-serif" font-size="2.6" fill="#8c8c8c" text-anchor="middle">200</text><text x="142.90" y="21.50" font-family="Liberation Sans, Noto Sans CJK JP, sans-serif" font-size="2.6" fill="#8c8c8c" text-anchor="middle">250</text><text x="140.70" y="16.30" font-family="Liberation Sans, Noto Sans CJK JP, sans-serif" font-size="2.4" fill="#8c8c8c" text-anchor="middle">千</text><rect x="52.9" y="25.07" width="17.34" height="3.85" fill="#5b9bd5"/><text x="68.94" y="27.93" font-family="Liberation Sans, Noto Sans CJK JP, sans-serif" font-size="2.3" fill="#fff" text-anchor="end">48</text><rect x="52.9" y="29.07" width="15.17" height="3.85" fill="#ed7d31"/><text x="66.77" y="31.92" font-family="Liberation Sans, Noto Sans CJK JP, sans-serif" font-size="2.3" fill="#fff" text-anchor="end">42</text><rect x="52.9" y="33.08" width="10.84" height="3.85" fill="#a5a5a5"/><text x="62.44" y="35.93" font-family="Liberation Sans, Noto Sans CJK JP, sans-serif" font-size="2.3" fill="#fff" text-anchor="end">30</text><text x="50.2" y="31.90" font-family="Liberation Sans, Noto Sans CJK JP, sans-serif" font-size="2.6" fill="#8c8c8c" text-anchor="end">ウニのabsorbバイスル</text><rect x="52.9" y="40.27" width="18.06" height="3.85" fill="#5b9bd5"/><text x="69.66" y="43.12" font-family="Liberation Sans, Noto Sans CJK JP, sans-serif" font-size="2.3" fill="#fff" text-anchor="end">50</text><rect x="52.9" y="44.27" width="25.28" height="3.85" fill="#ed7d31"/><text x="76.88" y="47.12" font-family="Liberation Sans, Noto Sans CJK JP, sans-serif" font-size="2.3" fill="#fff" text-anchor="end">70</text><rect x="52.9" y="48.27" width="28.90" height="3.85" fill="#a5a5a5"/><text x="80.50" y="51.12" font-family="Liberation Sans, Noto Sans CJK JP, sans-serif" font-size="2.3" fill="#fff" text-anchor="end">80</text><text x="50.2" y="47.10" font-family="Liberation Sans, Noto Sans CJK JP, sans-serif" font-size="2.6" fill="#8c8c8c" text-anchor="end">尻尾蘇になれるパウダー</text><rect x="52.9" y="55.48" width="2.89" height="3.85" fill="#5b9bd5"/><rect x="52.9" y="59.48" width="10.84" height="3.85" fill="#ed7d31"/><text x="62.44" y="62.33" font-family="Liberation Sans, Noto Sans CJK JP, sans-serif" font-size="2.3" fill="#fff" text-anchor="end">30</text><rect x="52.9" y="63.48" width="5.06" height="3.85" fill="#a5a5a5"/><text x="50.2" y="62.30" font-family="Liberation Sans, Noto Sans CJK JP, sans-serif" font-size="2.6" fill="#8c8c8c" text-anchor="end">ピンク色に染めるヘアカラー</text><rect x="52.9" y="70.67" width="71.16" height="3.85" fill="#5b9bd5"/><text x="122.76" y="73.52" font-family="Liberation Sans, Noto Sans CJK JP, sans-serif" font-size="2.3" fill="#fff" text-anchor="end">197</text><rect x="52.9" y="74.67" width="20.95" height="3.85" fill="#ed7d31"/><text x="72.55" y="77.52" font-family="Liberation Sans, Noto Sans CJK JP, sans-serif" font-size="2.3" fill="#fff" text-anchor="end">58</text><rect x="52.9" y="78.67" width="35.40" height="3.85" fill="#a5a5a5"/><text x="87.00" y="81.52" font-family="Liberation Sans, Noto Sans CJK JP, sans-serif" font-size="2.3" fill="#fff" text-anchor="end">98</text><text x="50.2" y="77.50" font-family="Liberation Sans, Noto Sans CJK JP, sans-serif" font-size="2.6" fill="#8c8c8c" text-anchor="end">恒温動物に進化するサプリメント</text><rect x="59.60" y="89.80" width="1.7" height="1.7" fill="#5b9bd5"/><text x="61.70" y="91.60" font-family="Liberation Sans, Noto Sans CJK JP, sans-serif" font-size="2.6" fill="#8c8c8c">大阪支店</text><rect x="74.20" y="89.80" width="1.7" height="1.7" fill="#ed7d31"/><text x="76.30" y="91.60" font-family="Liberation Sans, Noto Sans CJK JP, sans-serif" font-size="2.6" fill="#8c8c8c">京都支店</text><rect x="88.80" y="89.80" width="1.7" height="1.7" fill="#a5a5a5"/><text x="90.90" y="91.60" font-family="Liberation Sans, Noto Sans CJK JP, sans-serif" font-size="2.6" fill="#8c8c8c">神戸支店</text></svg>
<svg style="position:absolute;left:527.8px;top:149.8px" width="160.6" height="95.9" viewBox="0 0 160 96" preserveAspectRatio="none"><rect width="160" height="96" fill="#fff"/><path d="M9.6 0V96M150.8 0V96" stroke="#e6e6e6" stroke-width="0.5" fill="none"/><text x="80" y="7.10" font-family="Liberation Sans, Noto Sans CJK JP, sans-serif" font-size="3.6" font-weight="normal" fill="#b4b4b4" text-anchor="middle" letter-spacing="0.3">グラフ タイトル</text><path d="M52.60 22.20V84.20M70.66 22.20V84.20M88.72 22.20V84.20M106.78 22.20V84.20M124.84 22.20V84.20M142.90 22.20V84.20" stroke="#dedede" stroke-width="0.55" fill="none"/><text x="52.60" y="21.50" font-family="Liberation Sans, Noto Sans CJK JP, sans-serif" font-size="2.6" fill="#8c8c8c" text-anchor="middle">0</text><text x="70.66" y="21.50" font-family="Liberation Sans, Noto Sans CJK JP, sans-serif" font-size="2.6" fill="#8c8c8c" text-anchor="middle">50</text><text x="88.72" y="21.50" font-family="Liberation Sans, Noto Sans CJK JP, sans-serif" font-size="2.6" fill="#8c8c8c" text-anchor="middle">100</text><text x="106.78" y="21.50" font-family="Liberation Sans, Noto Sans CJK JP, sans-serif" font-size="2.6" fill="#8c8c8c" text-anchor="middle">150</text><text x="124.84" y="21.50" font-family="Liberation Sans, Noto Sans CJK JP, sans-serif" font-size="2.6" fill="#8c8c8c" text-anchor="middle">200</text><text x="142.90" y="21.50" font-family="Liberation Sans, Noto Sans CJK JP, sans-serif" font-size="2.6" fill="#8c8c8c" text-anchor="middle">250</text><text x="140.70" y="16.30" font-family="Liberation Sans, Noto Sans CJK JP, sans-serif" font-size="2.4" fill="#8c8c8c" text-anchor="middle">千</text><rect x="52.9" y="25.07" width="17.34" height="3.85" fill="#9dc3e6"/><rect x="52.9" y="29.07" width="15.17" height="3.85" fill="#f4b183"/><rect x="52.9" y="33.08" width="10.84" height="3.85" fill="#c9c9c9"/><text x="50.2" y="31.90" font-family="Liberation Sans, Noto Sans CJK JP, sans-serif" font-size="2.6" fill="#8c8c8c" text-anchor="end">ウニのabsorbバイスル</text><rect x="52.9" y="40.27" width="18.06" height="3.85" fill="#9dc3e6"/><rect x="52.9" y="44.27" width="25.28" height="3.85" fill="#f4b183"/><rect x="52.9" y="48.27" width="28.90" height="3.85" fill="#c9c9c9"/><text x="50.2" y="47.10" font-family="Liberation Sans, Noto Sans CJK JP, sans-serif" font-size="2.6" fill="#8c8c8c" text-anchor="end">尻尾蘇になれるパウダー</text><rect x="52.9" y="55.48" width="2.89" height="3.85" fill="#9dc3e6"/><rect x="52.9" y="59.48" width="10.84" height="3.85" fill="#f4b183"/><rect x="52.9" y="63.48" width="5.06" height="3.85" fill="#c9c9c9"/><text x="50.2" y="62.30" font-family="Liberation Sans, Noto Sans CJK JP, sans-serif" font-size="2.6" fill="#8c8c8c" text-anchor="end">ピンク色に染めるヘアカラー</text><rect x="52.9" y="70.67" width="71.16" height="3.85" fill="#9dc3e6"/><rect x="52.9" y="74.67" width="20.95" height="3.85" fill="#f4b183"/><rect x="52.9" y="78.67" width="35.40" height="3.85" fill="#c9c9c9"/><text x="50.2" y="77.50" font-family="Liberation Sans, Noto Sans CJK JP, sans-serif" font-size="2.6" fill="#8c8c8c" text-anchor="end">恒温動物に進化するサプリメント</text><rect x="59.60" y="89.80" width="1.7" height="1.7" fill="#9dc3e6"/><text x="61.70" y="91.60" font-family="Liberation Sans, Noto Sans CJK JP, sans-serif" font-size="2.6" fill="#8c8c8c">大阪支店</text><rect x="74.20" y="89.80" width="1.7" height="1.7" fill="#f4b183"/><text x="76.30" y="91.60" font-family="Liberation Sans, Noto Sans CJK JP, sans-serif" font-size="2.6" fill="#8c8c8c">京都支店</text><rect x="88.80" y="89.80" width="1.7" height="1.7" fill="#c9c9c9"/><text x="90.90" y="91.60" font-family="Liberation Sans, Noto Sans CJK JP, sans-serif" font-size="2.6" fill="#8c8c8c">神戸支店</text></svg>
<svg style="position:absolute;left:17.8px;top:255.7px" width="160.6" height="95.9" viewBox="0 0 160 96" preserveAspectRatio="none"><rect width="160" height="96" fill="#fff"/><path d="M9.6 0V96M150.8 0V96" stroke="#e6e6e6" stroke-width="0.5" fill="none"/><text x="80" y="7.93" font-family="Liberation Sans, Noto Sans CJK JP, sans-serif" font-size="4.25" font-weight="bold" fill="#525c6a" text-anchor="middle" letter-spacing="0.3">グラフ タイトル</text><path d="M52.60 22.20V84.20M70.66 22.20V84.20M88.72 22.20V84.20M106.78 22.20V84.20M124.84 22.20V84.20M142.90 22.20V84.20" stroke="#dedede" stroke-width="0.55" fill="none"/><text x="52.60" y="21.50" font-family="Liberation Sans, Noto Sans CJK JP, sans-serif" font-size="2.6" fill="#8c8c8c" text-anchor="middle">0</text><text x="70.66" y="21.50" font-family="Liberation Sans, Noto Sans CJK JP, sans-serif" font-size="2.6" fill="#8c8c8c" text-anchor="middle">50</text><text x="88.72" y="21.50" font-family="Liberation Sans, Noto Sans CJK JP, sans-serif" font-size="2.6" fill="#8c8c8c" text-anchor="middle">100</text><text x="106.78" y="21.50" font-family="Liberation Sans, Noto Sans CJK JP, sans-serif" font-size="2.6" fill="#8c8c8c" text-anchor="middle">150</text><text x="124.84" y="21.50" font-family="Liberation Sans, Noto Sans CJK JP, sans-serif" font-size="2.6" fill="#8c8c8c" text-anchor="middle">200</text><text x="142.90" y="21.50" font-family="Liberation Sans, Noto Sans CJK JP, sans-serif" font-size="2.6" fill="#8c8c8c" text-anchor="middle">250</text><text x="140.70" y="16.30" font-family="Liberation Sans, Noto Sans CJK JP, sans-serif" font-size="2.4" fill="#8c8c8c" text-anchor="middle">千</text><rect x="52.9" y="25.52" width="17.34" height="3.65" fill="#5b9bd5"/><rect x="52.9" y="29.17" width="15.17" height="3.65" fill="#ed7d31"/><rect x="52.9" y="32.82" width="10.84" height="3.65" fill="#a5a5a5"/><text x="50.2" y="31.90" font-family="Liberation Sans, Noto Sans CJK JP, sans-serif" font-size="2.6" fill="#8c8c8c" text-anchor="end">ウニのabsorbバイスル</text><rect x="52.9" y="40.72" width="18.06" height="3.65" fill="#5b9bd5"/><rect x="52.9" y="44.37" width="25.28" height="3.65" fill="#ed7d31"/><rect x="52.9" y="48.02" width="28.90" height="3.65" fill="#a5a5a5"/><text x="50.2" y="47.10" font-family="Liberation Sans, Noto Sans CJK JP, sans-serif" font-size="2.6" fill="#8c8c8c" text-anchor="end">尻尾蘇になれるパウダー</text><rect x="52.9" y="55.92" width="2.89" height="3.65" fill="#5b9bd5"/><rect x="52.9" y="59.57" width="10.84" height="3.65" fill="#ed7d31"/><rect x="52.9" y="63.22" width="5.06" height="3.65" fill="#a5a5a5"/><text x="50.2" y="62.30" font-family="Liberation Sans, Noto Sans CJK JP, sans-serif" font-size="2.6" fill="#8c8c8c" text-anchor="end">ピンク色に染めるヘアカラー</text><rect x="52.9" y="71.12" width="71.16" height="3.65" fill="#5b9bd5"/><rect x="52.9" y="74.78" width="20.95" height="3.65" fill="#ed7d31"/><rect x="52.9" y="78.42" width="35.40" height="3.65" fill="#a5a5a5"/><text x="50.2" y="77.50" font-family="Liberation Sans, Noto Sans CJK JP, sans-serif" font-size="2.6" fill="#8c8c8c" text-anchor="end">恒温動物に進化するサプリメント</text><rect x="59.60" y="89.80" width="1.7" height="1.7" fill="#5b9bd5"/><text x="61.70" y="91.60" font-family="Liberation Sans, Noto Sans CJK JP, sans-serif" font-size="2.6" fill="#8c8c8c">大阪支店</text><rect x="74.20" y="89.80" width="1.7" height="1.7" fill="#ed7d31"/><text x="76.30" y="91.60" font-family="Liberation Sans, Noto Sans CJK JP, sans-serif" font-size="2.6" fill="#8c8c8c">京都支店</text><rect x="88.80" y="89.80" width="1.7" height="1.7" fill="#a5a5a5"/><text x="90.90" y="91.60" font-family="Liberation Sans, Noto Sans CJK JP, sans-serif" font-size="2.6" fill="#8c8c8c">神戸支店</text></svg>
<svg style="position:absolute;left:188px;top:255.7px" width="160.6" height="95.9" viewBox="0 0 160 96" preserveAspectRatio="none"><rect width="160" height="96" fill="#fff"/><path d="M9.6 0V96M150.8 0V96" stroke="#e6e6e6" stroke-width="0.5" fill="none"/><text x="80" y="7.93" font-family="Liberation Sans, Noto Sans CJK JP, sans-serif" font-size="4.25" font-weight="bold" fill="#606060" text-anchor="middle" letter-spacing="0.3">グラフ タイトル</text><defs><pattern id="h6p6" width="3" height="3" patternUnits="userSpaceOnUse" patternTransform="rotate(45)"><rect width="3" height="3" fill="#fff"/><line x1="0" y1="0" x2="3" y2="0" stroke="#b8b8b8" stroke-width="0.7"/></pattern></defs><rect x="52.6" y="22.00" width="90.30" height="62.60" fill="url(#h6p6)"/><path d="M52.6 22.00V84.20" stroke="#c4c4c4" stroke-width="0.6"/><text x="52.60" y="21.50" font-family="Liberation Sans, Noto Sans CJK JP, sans-serif" font-size="2.6" fill="#8c8c8c" text-anchor="middle">0</text><text x="70.66" y="21.50" font-family="Liberation Sans, Noto Sans CJK JP, sans-serif" font-size="2.6" fill="#8c8c8c" text-anchor="middle">50</text><text x="88.72" y="21.50" font-family="Liberation Sans, Noto Sans CJK JP, sans-serif" font-size="2.6" fill="#8c8c8c" text-anchor="middle">100</text><text x="106.78" y="21.50" font-family="Liberation Sans, Noto Sans CJK JP, sans-serif" font-size="2.6" fill="#8c8c8c" text-anchor="middle">150</text><text x="124.84" y="21.50" font-family="Liberation Sans, Noto Sans CJK JP, sans-serif" font-size="2.6" fill="#8c8c8c" text-anchor="middle">200</text><text x="142.90" y="21.50" font-family="Liberation Sans, Noto Sans CJK JP, sans-serif" font-size="2.6" fill="#8c8c8c" text-anchor="middle">250</text><text x="140.70" y="16.30" font-family="Liberation Sans, Noto Sans CJK JP, sans-serif" font-size="2.4" fill="#8c8c8c" text-anchor="middle">千</text><rect x="52.9" y="26.80" width="17.34" height="2.8" fill="#5b9bd5"/><rect x="52.9" y="29.60" width="15.17" height="2.8" fill="#ed7d31"/><rect x="52.9" y="32.40" width="10.84" height="2.8" fill="#a5a5a5"/><text x="50.2" y="31.90" font-family="Liberation Sans, Noto Sans CJK JP, sans-serif" font-size="2.6" fill="#8c8c8c" text-anchor="end">ウニのabsorbバイスル</text><rect x="52.9" y="42.00" width="18.06" height="2.8" fill="#5b9bd5"/><rect x="52.9" y="44.80" width="25.28" height="2.8" fill="#ed7d31"/><rect x="52.9" y="47.60" width="28.90" height="2.8" fill="#a5a5a5"/><text x="50.2" y="47.10" font-family="Liberation Sans, Noto Sans CJK JP, sans-serif" font-size="2.6" fill="#8c8c8c" text-anchor="end">尻尾蘇になれるパウダー</text><rect x="52.9" y="57.20" width="2.89" height="2.8" fill="#5b9bd5"/><rect x="52.9" y="60.00" width="10.84" height="2.8" fill="#ed7d31"/><rect x="52.9" y="62.80" width="5.06" height="2.8" fill="#a5a5a5"/><text x="50.2" y="62.30" font-family="Liberation Sans, Noto Sans CJK JP, sans-serif" font-size="2.6" fill="#8c8c8c" text-anchor="end">ピンク色に染めるヘアカラー</text><rect x="52.9" y="72.40" width="71.16" height="2.8" fill="#5b9bd5"/><rect x="52.9" y="75.20" width="20.95" height="2.8" fill="#ed7d31"/><rect x="52.9" y="78.00" width="35.40" height="2.8" fill="#a5a5a5"/><text x="50.2" y="77.50" font-family="Liberation Sans, Noto Sans CJK JP, sans-serif" font-size="2.6" fill="#8c8c8c" text-anchor="end">恒温動物に進化するサプリメント</text><rect x="59.60" y="89.80" width="1.7" height="1.7" fill="#5b9bd5"/><text x="61.70" y="91.60" font-family="Liberation Sans, Noto Sans CJK JP, sans-serif" font-size="2.6" fill="#8c8c8c">大阪支店</text><rect x="74.20" y="89.80" width="1.7" height="1.7" fill="#ed7d31"/><text x="76.30" y="91.60" font-family="Liberation Sans, Noto Sans CJK JP, sans-serif" font-size="2.6" fill="#8c8c8c">京都支店</text><rect x="88.80" y="89.80" width="1.7" height="1.7" fill="#a5a5a5"/><text x="90.90" y="91.60" font-family="Liberation Sans, Noto Sans CJK JP, sans-serif" font-size="2.6" fill="#8c8c8c">神戸支店</text></svg>
<svg style="position:absolute;left:358px;top:255.7px" width="160.6" height="95.9" viewBox="0 0 160 96" preserveAspectRatio="none"><rect width="160" height="96" fill="#fff"/><defs><radialGradient id="g7p7" cx="0.5" cy="0.5" r="0.75"><stop offset="0" stop-color="#636363"/><stop offset="0.55" stop-color="#434343"/><stop offset="1" stop-color="#202020"/></radialGradient></defs><rect x="9.4" y="0" width="141.2" height="96" fill="url(#g7p7)"/><text x="80" y="7.93" font-family="Liberation Sans, Noto Sans CJK JP, sans-serif" font-size="4.25" font-weight="bold" fill="#f2f2f2" text-anchor="middle" letter-spacing="0.3">グラフ タイトル</text><path d="M52.60 22.20V84.20M70.66 22.20V84.20M88.72 22.20V84.20M106.78 22.20V84.20M124.84 22.20V84.20M142.90 22.20V84.20" stroke="rgba(255,255,255,0.07)" stroke-width="0.55" fill="none"/><text x="52.60" y="21.50" font-family="Liberation Sans, Noto Sans CJK JP, sans-serif" font-size="2.6" fill="#c8c8c8" text-anchor="middle">0</text><text x="70.66" y="21.50" font-family="Liberation Sans, Noto Sans CJK JP, sans-serif" font-size="2.6" fill="#c8c8c8" text-anchor="middle">50</text><text x="88.72" y="21.50" font-family="Liberation Sans, Noto Sans CJK JP, sans-serif" font-size="2.6" fill="#c8c8c8" text-anchor="middle">100</text><text x="106.78" y="21.50" font-family="Liberation Sans, Noto Sans CJK JP, sans-serif" font-size="2.6" fill="#c8c8c8" text-anchor="middle">150</text><text x="124.84" y="21.50" font-family="Liberation Sans, Noto Sans CJK JP, sans-serif" font-size="2.6" fill="#c8c8c8" text-anchor="middle">200</text><text x="142.90" y="21.50" font-family="Liberation Sans, Noto Sans CJK JP, sans-serif" font-size="2.6" fill="#c8c8c8" text-anchor="middle">250</text><text x="140.70" y="16.30" font-family="Liberation Sans, Noto Sans CJK JP, sans-serif" font-size="2.4" fill="#c8c8c8" text-anchor="middle">千</text><rect x="52.9" y="25.80" width="17.34" height="3.0" fill="#5b9bd5"/><rect x="52.9" y="29.50" width="15.17" height="3.0" fill="#ed7d31"/><rect x="52.9" y="33.20" width="10.84" height="3.0" fill="#a5a5a5"/><text x="50.2" y="31.90" font-family="Liberation Sans, Noto Sans CJK JP, sans-serif" font-size="2.6" fill="#c8c8c8" text-anchor="end">ウニのabsorbバイスル</text><rect x="52.9" y="41.00" width="18.06" height="3.0" fill="#5b9bd5"/><rect x="52.9" y="44.70" width="25.28" height="3.0" fill="#ed7d31"/><rect x="52.9" y="48.40" width="28.90" height="3.0" fill="#a5a5a5"/><text x="50.2" y="47.10" font-family="Liberation Sans, Noto Sans CJK JP, sans-serif" font-size="2.6" fill="#c8c8c8" text-anchor="end">尻尾蘇になれるパウダー</text><rect x="52.9" y="56.20" width="2.89" height="3.0" fill="#5b9bd5"/><rect x="52.9" y="59.90" width="10.84" height="3.0" fill="#ed7d31"/><rect x="52.9" y="63.60" width="5.06" height="3.0" fill="#a5a5a5"/><text x="50.2" y="62.30" font-family="Liberation Sans, Noto Sans CJK JP, sans-serif" font-size="2.6" fill="#c8c8c8" text-anchor="end">ピンク色に染めるヘアカラー</text><rect x="52.9" y="71.40" width="71.16" height="3.0" fill="#5b9bd5"/><rect x="52.9" y="75.10" width="20.95" height="3.0" fill="#ed7d31"/><rect x="52.9" y="78.80" width="35.40" height="3.0" fill="#a5a5a5"/><text x="50.2" y="77.50" font-family="Liberation Sans, Noto Sans CJK JP, sans-serif" font-size="2.6" fill="#c8c8c8" text-anchor="end">恒温動物に進化するサプリメント</text><rect x="59.60" y="89.80" width="1.7" height="1.7" fill="#5b9bd5"/><text x="61.70" y="91.60" font-family="Liberation Sans, Noto Sans CJK JP, sans-serif" font-size="2.6" fill="#c8c8c8">大阪支店</text><rect x="74.20" y="89.80" width="1.7" height="1.7" fill="#ed7d31"/><text x="76.30" y="91.60" font-family="Liberation Sans, Noto Sans CJK JP, sans-serif" font-size="2.6" fill="#c8c8c8">京都支店</text><rect x="88.80" y="89.80" width="1.7" height="1.7" fill="#a5a5a5"/><text x="90.90" y="91.60" font-family="Liberation Sans, Noto Sans CJK JP, sans-serif" font-size="2.6" fill="#c8c8c8">神戸支店</text></svg>
<svg style="position:absolute;left:527.8px;top:255.7px" width="160.6" height="95.9" viewBox="0 0 160 96" preserveAspectRatio="none"><rect width="160" height="96" fill="#fff"/><path d="M9.6 0V96M150.8 0V96" stroke="#e6e6e6" stroke-width="0.5" fill="none"/><text x="80" y="8.16" font-family="Liberation Sans, Noto Sans CJK JP, sans-serif" font-size="4.9" font-weight="bold" fill="#6a6a6a" text-anchor="middle" letter-spacing="0.3">グラフ タイトル</text><path d="M52.60 22.20V84.20M70.66 22.20V84.20M88.72 22.20V84.20M106.78 22.20V84.20M124.84 22.20V84.20M142.90 22.20V84.20" stroke="#dedede" stroke-width="0.55" fill="none"/><text x="52.60" y="21.50" font-family="Liberation Sans, Noto Sans CJK JP, sans-serif" font-size="2.6" fill="#8c8c8c" text-anchor="middle">0</text><text x="70.66" y="21.50" font-family="Liberation Sans, Noto Sans CJK JP, sans-serif" font-size="2.6" fill="#8c8c8c" text-anchor="middle">50</text><text x="88.72" y="21.50" font-family="Liberation Sans, Noto Sans CJK JP, sans-serif" font-size="2.6" fill="#8c8c8c" text-anchor="middle">100</text><text x="106.78" y="21.50" font-family="Liberation Sans, Noto Sans CJK JP, sans-serif" font-size="2.6" fill="#8c8c8c" text-anchor="middle">150</text><text x="124.84" y="21.50" font-family="Liberation Sans, Noto Sans CJK JP, sans-serif" font-size="2.6" fill="#8c8c8c" text-anchor="middle">200</text><text x="142.90" y="21.50" font-family="Liberation Sans, Noto Sans CJK JP, sans-serif" font-size="2.6" fill="#8c8c8c" text-anchor="middle">250</text><text x="140.70" y="16.30" font-family="Liberation Sans, Noto Sans CJK JP, sans-serif" font-size="2.4" fill="#8c8c8c" text-anchor="middle">千</text><defs><linearGradient id="b8p80" x1="0" y1="0" x2="1" y2="0"><stop offset="0" stop-color="#fff"/><stop offset="0.6" stop-color="#5b9bd5" stop-opacity="0.75"/><stop offset="1" stop-color="#5b9bd5"/></linearGradient><linearGradient id="b8p81" x1="0" y1="0" x2="1" y2="0"><stop offset="0" stop-color="#fff"/><stop offset="0.6" stop-color="#ed7d31" stop-opacity="0.75"/><stop offset="1" stop-color="#ed7d31"/></linearGradient><linearGradient id="b8p82" x1="0" y1="0" x2="1" y2="0"><stop offset="0" stop-color="#fff"/><stop offset="0.6" stop-color="#a5a5a5" stop-opacity="0.75"/><stop offset="1" stop-color="#a5a5a5"/></linearGradient></defs><rect x="53.0" y="26.85" width="17.34" height="2.1" fill="url(#b8p80)"/><rect x="53.0" y="29.95" width="15.17" height="2.1" fill="url(#b8p81)"/><rect x="53.0" y="33.05" width="10.84" height="2.1" fill="url(#b8p82)"/><text x="50.2" y="31.90" font-family="Liberation Sans, Noto Sans CJK JP, sans-serif" font-size="2.6" fill="#8c8c8c" text-anchor="end">ウニのabsorbバイスル</text><rect x="53.0" y="42.05" width="18.06" height="2.1" fill="url(#b8p80)"/><rect x="53.0" y="45.15" width="25.28" height="2.1" fill="url(#b8p81)"/><rect x="53.0" y="48.25" width="28.90" height="2.1" fill="url(#b8p82)"/><text x="50.2" y="47.10" font-family="Liberation Sans, Noto Sans CJK JP, sans-serif" font-size="2.6" fill="#8c8c8c" text-anchor="end">尻尾蘇になれるパウダー</text><rect x="53.0" y="57.25" width="2.89" height="2.1" fill="url(#b8p80)"/><rect x="53.0" y="60.35" width="10.84" height="2.1" fill="url(#b8p81)"/><rect x="53.0" y="63.45" width="5.06" height="2.1" fill="url(#b8p82)"/><text x="50.2" y="62.30" font-family="Liberation Sans, Noto Sans CJK JP, sans-serif" font-size="2.6" fill="#8c8c8c" text-anchor="end">ピンク色に染めるヘアカラー</text><rect x="53.0" y="72.45" width="71.16" height="2.1" fill="url(#b8p80)"/><rect x="53.0" y="75.55" width="20.95" height="2.1" fill="url(#b8p81)"/><rect x="53.0" y="78.65" width="35.40" height="2.1" fill="url(#b8p82)"/><text x="50.2" y="77.50" font-family="Liberation Sans, Noto Sans CJK JP, sans-serif" font-size="2.6" fill="#8c8c8c" text-anchor="end">恒温動物に進化するサプリメント</text><rect x="59.60" y="89.80" width="1.7" height="1.7" fill="#5b9bd5"/><text x="61.70" y="91.60" font-family="Liberation Sans, Noto Sans CJK JP, sans-serif" font-size="2.6" fill="#8c8c8c">大阪支店</text><rect x="74.20" y="89.80" width="1.7" height="1.7" fill="#ed7d31"/><text x="76.30" y="91.60" font-family="Liberation Sans, Noto Sans CJK JP, sans-serif" font-size="2.6" fill="#8c8c8c">京都支店</text><rect x="88.80" y="89.80" width="1.7" height="1.7" fill="#a5a5a5"/><text x="90.90" y="91.60" font-family="Liberation Sans, Noto Sans CJK JP, sans-serif" font-size="2.6" fill="#8c8c8c">神戸支店</text></svg>
<svg style="position:absolute;left:17.8px;top:361.8px" width="160.6" height="95.9" viewBox="0 0 160 96" preserveAspectRatio="none"><rect width="160" height="96" fill="#fff"/><path d="M9.6 0V96M150.8 0V96" stroke="#e6e6e6" stroke-width="0.5" fill="none"/><text x="80" y="8.38" font-family="Liberation Sans, Noto Sans CJK JP, sans-serif" font-size="4.95" font-weight="normal" fill="#9a9a9a" text-anchor="middle" letter-spacing="0.3">グラフ タイトル</text><path d="M52.6 31.00H142.90" stroke="#dcdcdc" stroke-width="0.6"/><text x="52.60" y="30.10" font-family="Liberation Sans, Noto Sans CJK JP, sans-serif" font-size="2.6" fill="#8c8c8c" text-anchor="middle">0</text><text x="70.66" y="30.10" font-family="Liberation Sans, Noto Sans CJK JP, sans-serif" font-size="2.6" fill="#8c8c8c" text-anchor="middle">50</text><text x="88.72" y="30.10" font-family="Liberation Sans, Noto Sans CJK JP, sans-serif" font-size="2.6" fill="#8c8c8c" text-anchor="middle">100</text><text x="106.78" y="30.10" font-family="Liberation Sans, Noto Sans CJK JP, sans-serif" font-size="2.6" fill="#8c8c8c" text-anchor="middle">150</text><text x="124.84" y="30.10" font-family="Liberation Sans, Noto Sans CJK JP, sans-serif" font-size="2.6" fill="#8c8c8c" text-anchor="middle">200</text><text x="142.90" y="30.10" font-family="Liberation Sans, Noto Sans CJK JP, sans-serif" font-size="2.6" fill="#8c8c8c" text-anchor="middle">250</text><text x="140.70" y="24.90" font-family="Liberation Sans, Noto Sans CJK JP, sans-serif" font-size="2.4" fill="#8c8c8c" text-anchor="middle">千</text><rect x="52.9" y="34.67" width="17.34" height="2.5" fill="#dce9f6" stroke="#5b9bd5" stroke-width="0.6"/><rect x="52.9" y="38.27" width="15.17" height="2.5" fill="#fff" stroke="#ed7d31" stroke-width="0.6"/><rect x="52.9" y="41.88" width="10.84" height="2.5" fill="#f0f0f0" stroke="#a5a5a5" stroke-width="0.6"/><text x="50.2" y="40.42" font-family="Liberation Sans, Noto Sans CJK JP, sans-serif" font-size="2.6" fill="#8c8c8c" text-anchor="end">ウニのabsorbバイスル</text><rect x="52.9" y="49.73" width="18.06" height="2.5" fill="#dce9f6" stroke="#5b9bd5" stroke-width="0.6"/><rect x="52.9" y="53.33" width="25.28" height="2.5" fill="#fff" stroke="#ed7d31" stroke-width="0.6"/><rect x="52.9" y="56.93" width="28.90" height="2.5" fill="#f0f0f0" stroke="#a5a5a5" stroke-width="0.6"/><text x="50.2" y="55.48" font-family="Liberation Sans, Noto Sans CJK JP, sans-serif" font-size="2.6" fill="#8c8c8c" text-anchor="end">尻尾蘇になれるパウダー</text><rect x="52.9" y="64.78" width="2.89" height="2.5" fill="#dce9f6" stroke="#5b9bd5" stroke-width="0.6"/><rect x="52.9" y="68.38" width="10.84" height="2.5" fill="#fff" stroke="#ed7d31" stroke-width="0.6"/><rect x="52.9" y="71.98" width="5.06" height="2.5" fill="#f0f0f0" stroke="#a5a5a5" stroke-width="0.6"/><text x="50.2" y="70.53" font-family="Liberation Sans, Noto Sans CJK JP, sans-serif" font-size="2.6" fill="#8c8c8c" text-anchor="end">ピンク色に染めるヘアカラー</text><rect x="52.9" y="79.83" width="71.16" height="2.5" fill="#dce9f6" stroke="#5b9bd5" stroke-width="0.6"/><rect x="52.9" y="83.43" width="20.95" height="2.5" fill="#fff" stroke="#ed7d31" stroke-width="0.6"/><rect x="52.9" y="87.03" width="35.40" height="2.5" fill="#f0f0f0" stroke="#a5a5a5" stroke-width="0.6"/><text x="50.2" y="85.58" font-family="Liberation Sans, Noto Sans CJK JP, sans-serif" font-size="2.6" fill="#8c8c8c" text-anchor="end">恒温動物に進化するサプリメント</text><rect x="59.60" y="14.90" width="1.7" height="1.7" fill="#5b9bd5"/><text x="61.70" y="16.70" font-family="Liberation Sans, Noto Sans CJK JP, sans-serif" font-size="2.6" fill="#8c8c8c">大阪支店</text><rect x="74.20" y="14.90" width="1.7" height="1.7" fill="#ed7d31"/><text x="76.30" y="16.70" font-family="Liberation Sans, Noto Sans CJK JP, sans-serif" font-size="2.6" fill="#8c8c8c">京都支店</text><rect x="88.80" y="14.90" width="1.7" height="1.7" fill="#a5a5a5"/><text x="90.90" y="16.70" font-family="Liberation Sans, Noto Sans CJK JP, sans-serif" font-size="2.6" fill="#8c8c8c">神戸支店</text></svg>
<svg style="position:absolute;left:188px;top:361.8px" width="160.6" height="95.9" viewBox="0 0 160 96" preserveAspectRatio="none"><rect width="160" height="96" fill="#fff"/><path d="M9.6 0V96M150.8 0V96" stroke="#e6e6e6" stroke-width="0.5" fill="none"/><text x="80" y="8.58" font-family="Liberation Sans, Noto Sans CJK JP, sans-serif" font-size="5.5" font-weight="normal" fill="#9a9a9a" text-anchor="middle" letter-spacing="0.3">グラフ タイトル</text><path d="M52.60 30.80V92.20M70.66 30.80V92.20M88.72 30.80V92.20M106.78 30.80V92.20M124.84 30.80V92.20M142.90 30.80V92.20" stroke="#dedede" stroke-width="0.55" fill="none"/><path d="M56.21 30.80V92.20M59.82 30.80V92.20M63.44 30.80V92.20M67.05 30.80V92.20M74.27 30.80V92.20M77.88 30.80V92.20M81.50 30.80V92.20M85.11 30.80V92.20M92.33 30.80V92.20M95.94 30.80V92.20M99.56 30.80V92.20M103.17 30.80V92.20M110.39 30.80V92.20M114.00 30.80V92.20M117.62 30.80V92.20M121.23 30.80V92.20M128.45 30.80V92.20M132.06 30.80V92.20M135.68 30.80V92.20M139.29 30.80V92.20" stroke="#efefef" stroke-width="0.45" fill="none"/><text x="52.60" y="30.10" font-family="Liberation Sans, Noto Sans CJK JP, sans-serif" font-size="2.6" fill="#8c8c8c" text-anchor="middle">0</text><text x="70.66" y="30.10" font-family="Liberation Sans, Noto Sans CJK JP, sans-serif" font-size="2.6" fill="#8c8c8c" text-anchor="middle">50</text><text x="88.72" y="30.10" font-family="Liberation Sans, Noto Sans CJK JP, sans-serif" font-size="2.6" fill="#8c8c8c" text-anchor="middle">100</text><text x="106.78" y="30.10" font-family="Liberation Sans, Noto Sans CJK JP, sans-serif" font-size="2.6" fill="#8c8c8c" text-anchor="middle">150</text><text x="124.84" y="30.10" font-family="Liberation Sans, Noto Sans CJK JP, sans-serif" font-size="2.6" fill="#8c8c8c" text-anchor="middle">200</text><text x="142.90" y="30.10" font-family="Liberation Sans, Noto Sans CJK JP, sans-serif" font-size="2.6" fill="#8c8c8c" text-anchor="middle">250</text><text x="140.70" y="24.90" font-family="Liberation Sans, Noto Sans CJK JP, sans-serif" font-size="2.4" fill="#8c8c8c" text-anchor="middle">千</text><rect x="52.9" y="35.33" width="17.34" height="2.8" fill="#5b9bd5"/><rect x="52.9" y="38.12" width="15.17" height="2.8" fill="#ed7d31"/><rect x="52.9" y="40.93" width="10.84" height="2.8" fill="#a5a5a5"/><text x="50.2" y="40.42" font-family="Liberation Sans, Noto Sans CJK JP, sans-serif" font-size="2.6" fill="#8c8c8c" text-anchor="end">ウニのabsorbバイスル</text><rect x="52.9" y="50.38" width="18.06" height="2.8" fill="#5b9bd5"/><rect x="52.9" y="53.17" width="25.28" height="2.8" fill="#ed7d31"/><rect x="52.9" y="55.98" width="28.90" height="2.8" fill="#a5a5a5"/><text x="50.2" y="55.48" font-family="Liberation Sans, Noto Sans CJK JP, sans-serif" font-size="2.6" fill="#8c8c8c" text-anchor="end">尻尾蘇になれるパウダー</text><rect x="52.9" y="65.42" width="2.89" height="2.8" fill="#5b9bd5"/><rect x="52.9" y="68.22" width="10.84" height="2.8" fill="#ed7d31"/><rect x="52.9" y="71.02" width="5.06" height="2.8" fill="#a5a5a5"/><text x="50.2" y="70.53" font-family="Liberation Sans, Noto Sans CJK JP, sans-serif" font-size="2.6" fill="#8c8c8c" text-anchor="end">ピンク色に染めるヘアカラー</text><rect x="52.9" y="80.48" width="71.16" height="2.8" fill="#5b9bd5"/><rect x="52.9" y="83.28" width="20.95" height="2.8" fill="#ed7d31"/><rect x="52.9" y="86.08" width="35.40" height="2.8" fill="#a5a5a5"/><text x="50.2" y="85.58" font-family="Liberation Sans, Noto Sans CJK JP, sans-serif" font-size="2.6" fill="#8c8c8c" text-anchor="end">恒温動物に進化するサプリメント</text><rect x="59.60" y="14.90" width="1.7" height="1.7" fill="#5b9bd5"/><text x="61.70" y="16.70" font-family="Liberation Sans, Noto Sans CJK JP, sans-serif" font-size="2.6" fill="#8c8c8c">大阪支店</text><rect x="74.20" y="14.90" width="1.7" height="1.7" fill="#ed7d31"/><text x="76.30" y="16.70" font-family="Liberation Sans, Noto Sans CJK JP, sans-serif" font-size="2.6" fill="#8c8c8c">京都支店</text><rect x="88.80" y="14.90" width="1.7" height="1.7" fill="#a5a5a5"/><text x="90.90" y="16.70" font-family="Liberation Sans, Noto Sans CJK JP, sans-serif" font-size="2.6" fill="#8c8c8c">神戸支店</text></svg>
<svg style="position:absolute;left:358px;top:361.8px" width="160.6" height="95.9" viewBox="0 0 160 96" preserveAspectRatio="none"><rect width="160" height="96" fill="#fff"/><rect x="9.4" y="0" width="141.2" height="96" fill="#414141"/><text x="80" y="7.13" font-family="Liberation Sans, Noto Sans CJK JP, sans-serif" font-size="3.7" font-weight="bold" fill="#e4e4e4" text-anchor="middle" letter-spacing="0.3">グラフ タイトル</text><path d="M52.60 29.60V92.40M70.66 29.60V92.40M88.72 29.60V92.40M106.78 29.60V92.40M124.84 29.60V92.40M142.90 29.60V92.40" stroke="#565656" stroke-width="0.55" fill="none"/><path d="M52.6 30.80H142.90M52.6 46.20H142.90M52.6 61.60H142.90M52.6 77.00H142.90M52.6 92.40H142.90" stroke="#565656" stroke-width="0.5" fill="none"/><text x="52.60" y="28.70" font-family="Liberation Sans, Noto Sans CJK JP, sans-serif" font-size="2.6" fill="#a8a8a8" text-anchor="middle">0</text><text x="70.66" y="28.70" font-family="Liberation Sans, Noto Sans CJK JP, sans-serif" font-size="2.6" fill="#a8a8a8" text-anchor="middle">50</text><text x="88.72" y="28.70" font-family="Liberation Sans, Noto Sans CJK JP, sans-serif" font-size="2.6" fill="#a8a8a8" text-anchor="middle">100</text><text x="106.78" y="28.70" font-family="Liberation Sans, Noto Sans CJK JP, sans-serif" font-size="2.6" fill="#a8a8a8" text-anchor="middle">150</text><text x="124.84" y="28.70" font-family="Liberation Sans, Noto Sans CJK JP, sans-serif" font-size="2.6" fill="#a8a8a8" text-anchor="middle">200</text><text x="142.90" y="28.70" font-family="Liberation Sans, Noto Sans CJK JP, sans-serif" font-size="2.6" fill="#a8a8a8" text-anchor="middle">250</text><text x="140.70" y="23.50" font-family="Liberation Sans, Noto Sans CJK JP, sans-serif" font-size="2.4" fill="#a8a8a8" text-anchor="middle">千</text><rect x="52.2" y="32.50" width="18.24" height="4.2" fill="#6d9bd0" opacity="0.28"/><rect x="52.6" y="33.00" width="17.34" height="3.2" fill="#3f6c9c"/><rect x="52.2" y="36.40" width="16.07" height="4.2" fill="#e08a45" opacity="0.28"/><rect x="52.6" y="36.90" width="15.17" height="3.2" fill="#a5602c"/><rect x="52.2" y="40.30" width="11.74" height="4.2" fill="#9a9a9a" opacity="0.28"/><rect x="52.6" y="40.80" width="10.84" height="3.2" fill="#6e6e6e"/><text x="50.2" y="39.40" font-family="Liberation Sans, Noto Sans CJK JP, sans-serif" font-size="2.6" fill="#a8a8a8" text-anchor="end">ウニのabsorbバイスル</text><rect x="52.2" y="47.90" width="18.96" height="4.2" fill="#6d9bd0" opacity="0.28"/><rect x="52.6" y="48.40" width="18.06" height="3.2" fill="#3f6c9c"/><rect x="52.2" y="51.80" width="26.18" height="4.2" fill="#e08a45" opacity="0.28"/><rect x="52.6" y="52.30" width="25.28" height="3.2" fill="#a5602c"/><rect x="52.2" y="55.70" width="29.80" height="4.2" fill="#9a9a9a" opacity="0.28"/><rect x="52.6" y="56.20" width="28.90" height="3.2" fill="#6e6e6e"/><text x="50.2" y="54.80" font-family="Liberation Sans, Noto Sans CJK JP, sans-serif" font-size="2.6" fill="#a8a8a8" text-anchor="end">尻尾蘇になれるパウダー</text><rect x="52.2" y="63.30" width="3.79" height="4.2" fill="#6d9bd0" opacity="0.28"/><rect x="52.6" y="63.80" width="2.89" height="3.2" fill="#3f6c9c"/><rect x="52.2" y="67.20" width="11.74" height="4.2" fill="#e08a45" opacity="0.28"/><rect x="52.6" y="67.70" width="10.84" height="3.2" fill="#a5602c"/><rect x="52.2" y="71.10" width="5.96" height="4.2" fill="#9a9a9a" opacity="0.28"/><rect x="52.6" y="71.60" width="5.06" height="3.2" fill="#6e6e6e"/><text x="50.2" y="70.20" font-family="Liberation Sans, Noto Sans CJK JP, sans-serif" font-size="2.6" fill="#a8a8a8" text-anchor="end">ピンク色に染めるヘアカラー</text><rect x="52.2" y="78.70" width="72.06" height="4.2" fill="#6d9bd0" opacity="0.28"/><rect x="52.6" y="79.20" width="71.16" height="3.2" fill="#3f6c9c"/><rect x="52.2" y="82.60" width="21.85" height="4.2" fill="#e08a45" opacity="0.28"/><rect x="52.6" y="83.10" width="20.95" height="3.2" fill="#a5602c"/><rect x="52.2" y="86.50" width="36.30" height="4.2" fill="#9a9a9a" opacity="0.28"/><rect x="52.6" y="87.00" width="35.40" height="3.2" fill="#6e6e6e"/><text x="50.2" y="85.60" font-family="Liberation Sans, Noto Sans CJK JP, sans-serif" font-size="2.6" fill="#a8a8a8" text-anchor="end">恒温動物に進化するサプリメント</text><rect x="59.60" y="13.50" width="1.7" height="1.7" fill="#3f6c9c"/><text x="61.70" y="15.30" font-family="Liberation Sans, Noto Sans CJK JP, sans-serif" font-size="2.6" fill="#a8a8a8">大阪支店</text><rect x="74.20" y="13.50" width="1.7" height="1.7" fill="#a5602c"/><text x="76.30" y="15.30" font-family="Liberation Sans, Noto Sans CJK JP, sans-serif" font-size="2.6" fill="#a8a8a8">京都支店</text><rect x="88.80" y="13.50" width="1.7" height="1.7" fill="#6e6e6e"/><text x="90.90" y="15.30" font-family="Liberation Sans, Noto Sans CJK JP, sans-serif" font-size="2.6" fill="#a8a8a8">神戸支店</text></svg>
<svg style="position:absolute;left:527.8px;top:361.8px" width="160.6" height="95.9" viewBox="0 0 160 96" preserveAspectRatio="none"><rect width="160" height="96" fill="#fff"/><path d="M9.6 0V96M150.8 0V96" stroke="#e6e6e6" stroke-width="0.5" fill="none"/><text x="80" y="7.93" font-family="Liberation Sans, Noto Sans CJK JP, sans-serif" font-size="4.25" font-weight="bold" fill="#606060" text-anchor="middle" letter-spacing="0.3">グラフ タイトル</text><path d="M52.60 22.20V84.20M70.66 22.20V84.20M88.72 22.20V84.20M106.78 22.20V84.20M124.84 22.20V84.20M142.90 22.20V84.20" stroke="#dedede" stroke-width="0.55" fill="none"/><text x="52.60" y="21.50" font-family="Liberation Sans, Noto Sans CJK JP, sans-serif" font-size="2.6" fill="#8c8c8c" text-anchor="middle">0</text><text x="70.66" y="21.50" font-family="Liberation Sans, Noto Sans CJK JP, sans-serif" font-size="2.6" fill="#8c8c8c" text-anchor="middle">50</text><text x="88.72" y="21.50" font-family="Liberation Sans, Noto Sans CJK JP, sans-serif" font-size="2.6" fill="#8c8c8c" text-anchor="middle">100</text><text x="106.78" y="21.50" font-family="Liberation Sans, Noto Sans CJK JP, sans-serif" font-size="2.6" fill="#8c8c8c" text-anchor="middle">150</text><text x="124.84" y="21.50" font-family="Liberation Sans, Noto Sans CJK JP, sans-serif" font-size="2.6" fill="#8c8c8c" text-anchor="middle">200</text><text x="142.90" y="21.50" font-family="Liberation Sans, Noto Sans CJK JP, sans-serif" font-size="2.6" fill="#8c8c8c" text-anchor="middle">250</text><text x="140.70" y="16.30" font-family="Liberation Sans, Noto Sans CJK JP, sans-serif" font-size="2.4" fill="#8c8c8c" text-anchor="middle">千</text><rect x="53.2" y="26.45" width="17.64" height="3.3" fill="#000" opacity="0.22"/><rect x="52.6" y="25.65" width="17.34" height="3.3" fill="#5b9bd5"/><rect x="53.2" y="30.15" width="15.47" height="3.3" fill="#000" opacity="0.22"/><rect x="52.6" y="29.35" width="15.17" height="3.3" fill="#ed7d31"/><rect x="53.2" y="33.85" width="11.14" height="3.3" fill="#000" opacity="0.22"/><rect x="52.6" y="33.05" width="10.84" height="3.3" fill="#a5a5a5"/><text x="50.2" y="31.90" font-family="Liberation Sans, Noto Sans CJK JP, sans-serif" font-size="2.6" fill="#8c8c8c" text-anchor="end">ウニのabsorbバイスル</text><rect x="53.2" y="41.65" width="18.36" height="3.3" fill="#000" opacity="0.22"/><rect x="52.6" y="40.85" width="18.06" height="3.3" fill="#5b9bd5"/><rect x="53.2" y="45.35" width="25.58" height="3.3" fill="#000" opacity="0.22"/><rect x="52.6" y="44.55" width="25.28" height="3.3" fill="#ed7d31"/><rect x="53.2" y="49.05" width="29.20" height="3.3" fill="#000" opacity="0.22"/><rect x="52.6" y="48.25" width="28.90" height="3.3" fill="#a5a5a5"/><text x="50.2" y="47.10" font-family="Liberation Sans, Noto Sans CJK JP, sans-serif" font-size="2.6" fill="#8c8c8c" text-anchor="end">尻尾蘇になれるパウダー</text><rect x="53.2" y="56.85" width="3.19" height="3.3" fill="#000" opacity="0.22"/><rect x="52.6" y="56.05" width="2.89" height="3.3" fill="#5b9bd5"/><rect x="53.2" y="60.55" width="11.14" height="3.3" fill="#000" opacity="0.22"/><rect x="52.6" y="59.75" width="10.84" height="3.3" fill="#ed7d31"/><rect x="53.2" y="64.25" width="5.36" height="3.3" fill="#000" opacity="0.22"/><rect x="52.6" y="63.45" width="5.06" height="3.3" fill="#a5a5a5"/><text x="50.2" y="62.30" font-family="Liberation Sans, Noto Sans CJK JP, sans-serif" font-size="2.6" fill="#8c8c8c" text-anchor="end">ピンク色に染めるヘアカラー</text><rect x="53.2" y="72.05" width="71.46" height="3.3" fill="#000" opacity="0.22"/><rect x="52.6" y="71.25" width="71.16" height="3.3" fill="#5b9bd5"/><rect x="53.2" y="75.75" width="21.25" height="3.3" fill="#000" opacity="0.22"/><rect x="52.6" y="74.95" width="20.95" height="3.3" fill="#ed7d31"/><rect x="53.2" y="79.45" width="35.70" height="3.3" fill="#000" opacity="0.22"/><rect x="52.6" y="78.65" width="35.40" height="3.3" fill="#a5a5a5"/><text x="50.2" y="77.50" font-family="Liberation Sans, Noto Sans CJK JP, sans-serif" font-size="2.6" fill="#8c8c8c" text-anchor="end">恒温動物に進化するサプリメント</text><rect x="59.60" y="89.80" width="1.7" height="1.7" fill="#5b9bd5"/><text x="61.70" y="91.60" font-family="Liberation Sans, Noto Sans CJK JP, sans-serif" font-size="2.6" fill="#8c8c8c">大阪支店</text><rect x="74.20" y="89.80" width="1.7" height="1.7" fill="#ed7d31"/><text x="76.30" y="91.60" font-family="Liberation Sans, Noto Sans CJK JP, sans-serif" font-size="2.6" fill="#8c8c8c">京都支店</text><rect x="88.80" y="89.80" width="1.7" height="1.7" fill="#a5a5a5"/><text x="90.90" y="91.60" font-family="Liberation Sans, Noto Sans CJK JP, sans-serif" font-size="2.6" fill="#8c8c8c">神戸支店</text></svg>
<div class="abs" style="left:482.6px;top:337.2px;width:62.6px;height:17.8px;box-sizing:border-box;background:#f1f1f1;border:1px solid #cfcfcf;box-shadow:0 1px 2px rgba(0,0,0,0.18)"></div>
<div class="t" style="left:489px;top:340.4px;font-size:11px;color:#1a1a1a;line-height:12px;letter-spacing:-0.35px;word-spacing:-0.9px">スタイル 7</div>
<svg class="abs" style="left:472px;top:304px" width="16" height="22" viewBox="0 0 16 22"><path d="M2.6 2.4V17.2L6 14.1 8.4 19.6 10.9 18.5 8.5 13.2H13.2Z" fill="#111" stroke="#fff" stroke-width="1.1" stroke-linejoin="round"/></svg>
<div class="abs" style="left:0;top:560.2px;width:788px;height:27px;background:#efefef"></div>
<div class="abs" style="left:0;top:559.7px;width:788px;height:1px;background:#c4c4c4"></div>
<div class="abs" style="left:60.4px;top:560px;width:72.8px;height:23px;background:#fff;border-radius:0 0 4px 4px;box-shadow:0 0.5px 1.5px rgba(0,0,0,0.45)"></div>
<div class="abs" style="left:60.4px;top:559.4px;width:72.8px;height:1.6px;background:#fff"></div>
<svg class="abs" style="left:12px;top:567px" width="36" height="14" viewBox="0 0 36 14"><path d="M10.5 2.3V11.8L2.9 7.05Z" fill="#8c8c8c"/><path d="M26.1 2.3V11.8L33.7 7.05Z" fill="#8c8c8c"/></svg>
<div class="stab" style="left:96.6px;color:#2b8050">1月</div>
<div class="stab" style="left:169.6px">2月</div>
<div class="stab" style="left:242.4px">3月</div>
<div class="stab" style="left:318px">第4四半期</div>
<div class="abs" style="left:206.3px;top:561.5px;width:1px;height:21px;background:#d0d0d0"></div>
<div class="abs" style="left:279.4px;top:561.5px;width:1px;height:21px;background:#d0d0d0"></div>
<div class="abs" style="left:356.6px;top:561.5px;width:1px;height:21px;background:#d0d0d0"></div>
<div class="abs" style="left:395px;top:561.5px;width:1px;height:21px;background:#d0d0d0"></div>
<svg class="abs" style="left:369px;top:567px" width="14" height="14" viewBox="0 0 14 14"><path d="M7 1.8v10.4M1.8 7h10.4" stroke="#3a3a3a" stroke-width="1.7"/></svg>
<div class="abs" style="left:0;top:587px;width:788px;height:23px;background:linear-gradient(#e5e5e5,#d4d4d4)"></div>
<div class="abs" style="left:0;top:586.9px;width:788px;height:1px;background:#b4b4b4"></div>
<div class="t" style="left:24.8px;top:592.4px;font-size:11.6px;color:#555;line-height:12px;letter-spacing:-0.3px">コマンド</div>
<svg class="abs" style="left:88px;top:590px" width="18" height="16" viewBox="0 0 18 16" fill="none" stroke="#595959"><circle cx="3.4" cy="3.4" r="2.4" fill="#595959" stroke="none"/><path d="M4.3 5.4V12.4" stroke-width="1"/><path d="M1.2 13H8.6" stroke-width="1.8"/><path d="M7.2 2.3H14.2L15.6 4.5H12.6Z" fill="#595959" stroke-width="0.8"/><path d="M12.4 2.6V11.4Q12.4 14.3 9.4 14.3H3Q1.3 14.3 1.2 13" stroke-width="1.1"/></svg>
<div class="abs" style="left:506.3px;top:587.8px;width:36.3px;height:23px;background:#ababab"></div>
<svg class="abs" style="left:518px;top:592px" width="13" height="13" viewBox="0 0 13 13"><rect x="0" y="0" width="13" height="13" rx="0.8" fill="#fdfdfd"/><g fill="#a2a2a2"><rect x="1.2" y="1.2" width="2.7" height="2.7"/><rect x="5.15" y="1.2" width="2.7" height="2.7"/><rect x="9.1" y="1.2" width="2.7" height="2.7"/><rect x="1.2" y="5.15" width="2.7" height="2.7"/><rect x="5.15" y="5.15" width="2.7" height="2.7"/><rect x="9.1" y="5.15" width="2.7" height="2.7"/><rect x="1.2" y="9.1" width="2.7" height="2.7"/><rect x="5.15" y="9.1" width="2.7" height="2.7"/><rect x="9.1" y="9.1" width="2.7" height="2.7"/></g></svg>
<svg class="abs" style="left:553px;top:592px" width="14" height="13" viewBox="0 0 14 13"><rect x="0.6" y="0.6" width="12.8" height="11.8" rx="0.5" fill="none" stroke="#585858" stroke-width="1.2"/><rect x="3.5" y="2.5" width="7" height="8" fill="none" stroke="#585858" stroke-width="1"/><path d="M5.2 4.5h3.6M5.2 6.5h3.6M5.2 8.5h3.6" stroke="#585858" stroke-width="0.9"/></svg>
<div class="abs" style="left:585.6px;top:597.6px;width:7.6px;height:2px;background:#444"></div>
<div class="abs" style="left:600.6px;top:597px;width:100px;height:3.2px;border-radius:2px;background:#a9a9a9"></div>
<div class="abs" style="left:645.4px;top:592.4px;width:12.4px;height:12.4px;box-sizing:border-box;border-radius:50%;background:#fff;border:0.8px solid #a2a2a2;box-shadow:0 0.5px 1px rgba(0,0,0,0.3)"></div>
<svg class="abs" style="left:706px;top:593px" width="12" height="12" viewBox="0 0 12 12"><path d="M6 1.4v9.2M1.4 6h9.2" stroke="#444" stroke-width="1.8"/></svg>
<div class="t" style="left:732.6px;top:592.6px;font-size:11.9px;color:#444;line-height:12px">100%</div>
</div></body></html>
